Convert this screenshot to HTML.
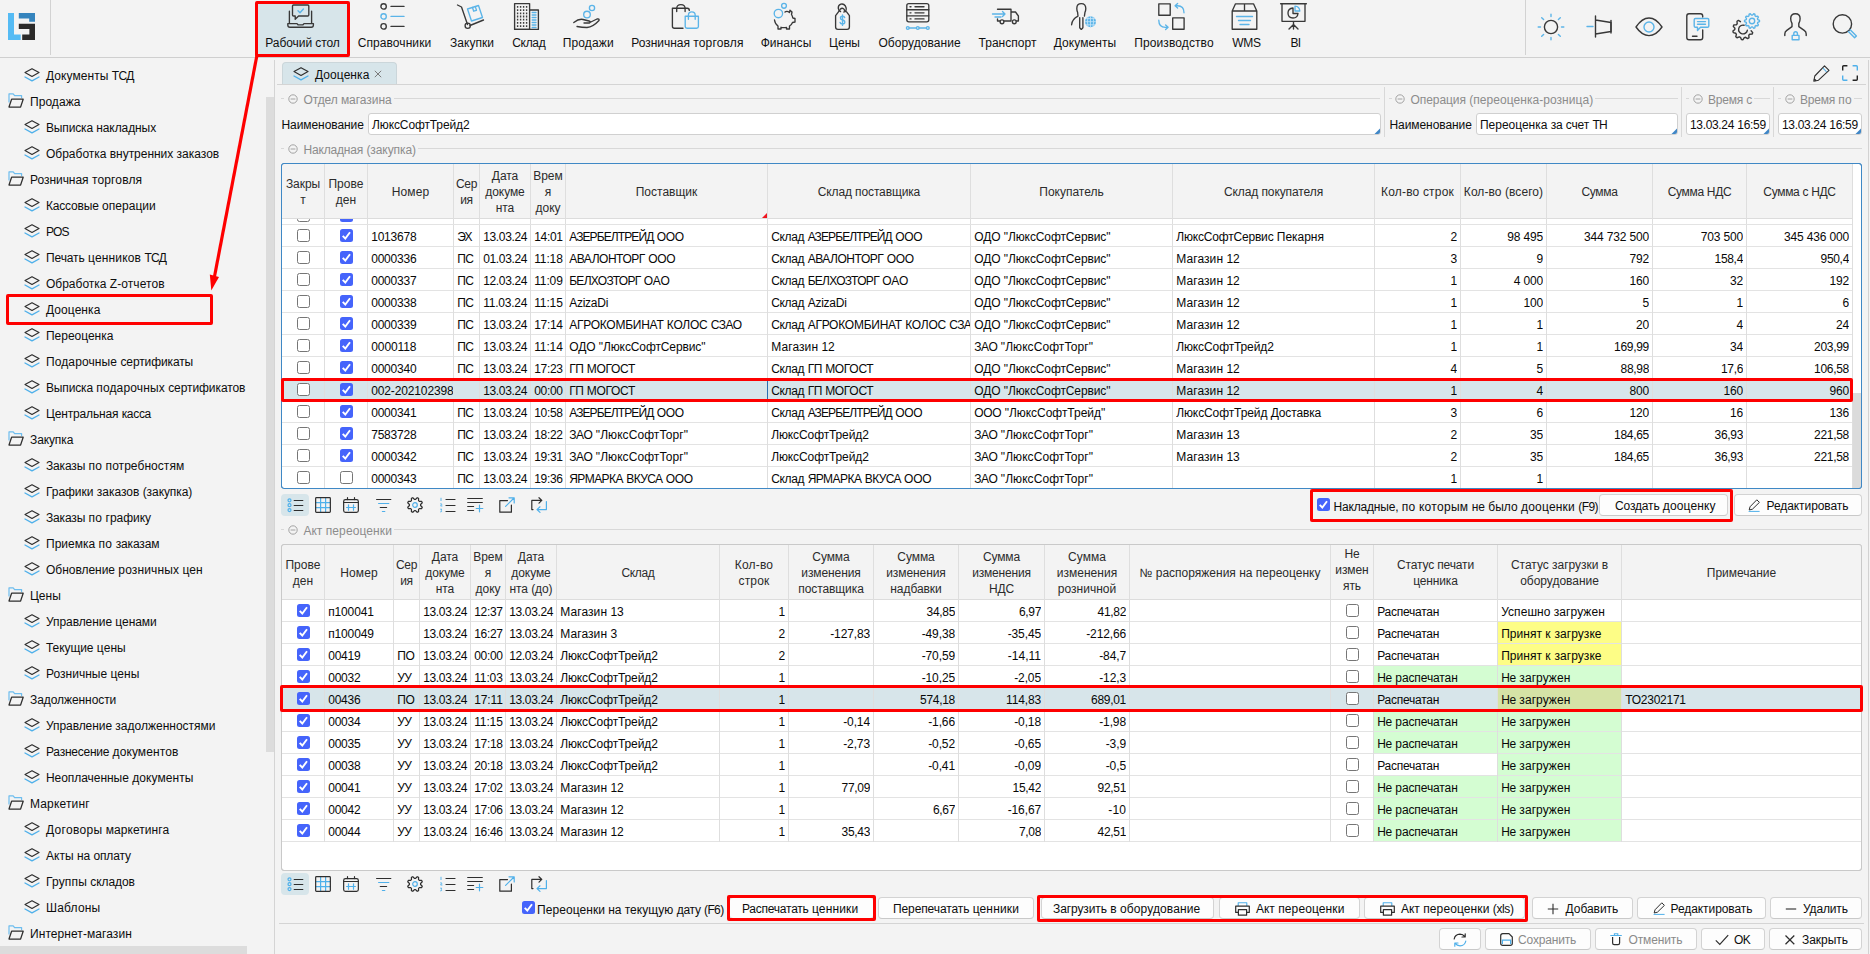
<!DOCTYPE html>
<html lang="ru"><head><meta charset="utf-8"><title>Дооценка</title><style>
html,body{margin:0;padding:0}
body{width:1870px;height:954px;overflow:hidden;background:#f3f3f3;font-family:"Liberation Sans",sans-serif;font-size:12px;color:#0d0d0d;position:relative}
.a{position:absolute}
.t{position:absolute;white-space:nowrap;line-height:16px;height:16px}
.c{position:absolute;white-space:nowrap;line-height:22px;height:22px;font-size:12px;color:#080808;overflow:hidden}
.h{position:absolute;text-align:center;line-height:16px;color:#2b2b2b;display:flex;align-items:center;justify-content:center}
.vl{position:absolute;width:1px;background:#dedede}
.hl{position:absolute;height:1px;background:#e3e3e3}
.cb{position:absolute;width:11px;height:11px;border:1px solid #767676;border-radius:2.5px;background:#fff}
.cbc{position:absolute;width:13px;height:13px;border-radius:2.5px;background:#4564fb}
.btn{position:absolute;height:22px;border:1px solid #d3d3d3;border-bottom-color:#c9c9c9;border-radius:4px;background:#fdfdfd;box-sizing:border-box;line-height:19px;text-align:center;white-space:nowrap;font-size:12px;color:#0d0d0d}
.inp{position:absolute;box-sizing:border-box;border:1px solid #d0d0d0;border-radius:3px;background:#fff;line-height:22.5px;padding-left:4px;white-space:nowrap;overflow:hidden}
.leg{position:absolute;color:#8c8c8c;line-height:16px;white-space:nowrap;background:#f3f3f3;padding:0 2px}
.red{position:absolute;border:3px solid #fe0000;box-sizing:border-box;border-radius:2px;z-index:5}
svg{position:absolute;overflow:visible}
</style></head><body>
<div class="a" style="left:0;top:0;width:1870px;height:57px;background:#f3f3f3"></div>
<div class="a" style="left:0;top:57px;width:1870px;height:1px;background:#cfcfcf"></div>
<div class="a" style="left:50px;top:0;width:1px;height:55px;background:#d2d2d2"></div>
<div class="a" style="left:1525px;top:0;width:1px;height:55px;background:#d2d2d2"></div>
<svg width="28" height="28" viewBox="0 0 28 28" style="left:8px;top:13px"><path d="M0 0 H6 V21.4 H12.7 V27 H0 Z" fill="#55bbf4"/><path d="M10.8 0 H27 V8.8 H21.2 V5.4 H10.8 Z" fill="#3584bd"/><path d="M10.8 10.8 H27 V27 H14.2 V21.4 H21.4 V16 H10.8 Z" fill="#2b2a29"/></svg>
<div class="a" style="left:256px;top:1px;width:94px;height:56px;background:#d7e5ea"></div>
<div class="t" style="left:232.5px;width:140px;top:35px;text-align:center;font-size:12px;color:#111"><span style="letter-spacing:-0.07px">Рабочий</span> <span style="letter-spacing:-0.11px">стол</span></div>
<svg width="27" height="25" viewBox="0 0 27 25" style="left:287px;top:4px"><path d="M2.4 7.2 V19 M24.6 7.2 V19" fill="none" stroke="#383838" stroke-width="1.35" stroke-linecap="round" stroke-linejoin="round"/><path d="M0.8 19.6 H10 L11 20.8 H16 L17 19.6 H26.4 V21 Q26.4 23.2 24.2 23.2 H3 Q0.8 23.2 0.8 21 Z" fill="none" stroke="#383838" stroke-width="1.35" stroke-linecap="round" stroke-linejoin="round"/><path d="M6.5 1 H20.8 Q21.8 1 21.8 2 V11 Q21.8 12 20.8 12 H11.6 L8.2 15.2 V12 H6.5 Q5.5 12 5.5 11 V2 Q5.5 1 6.5 1 Z" fill="none" stroke="#383838" stroke-width="1.35" stroke-linecap="round" stroke-linejoin="round"/><path d="M11 6.8 L13 8.8 L16.4 5" fill="none" stroke="#5bb4e8" stroke-width="1.35" stroke-linecap="round" stroke-linejoin="round"/></svg>
<div class="t" style="left:324.5px;width:140px;top:35px;text-align:center;font-size:12px;color:#111"><span style="letter-spacing:0.07px">Справочники</span></div>
<svg width="25" height="27" viewBox="0 0 25 27" style="left:380px;top:3px"><circle cx="3.6" cy="3.4" r="2.7" fill="none" stroke="#383838" stroke-width="1.35" stroke-linecap="round" stroke-linejoin="round"/><circle cx="3.6" cy="13.4" r="2.7" fill="none" stroke="#5bb4e8" stroke-width="1.35" stroke-linecap="round" stroke-linejoin="round"/><circle cx="3.6" cy="23.4" r="2.7" fill="none" stroke="#383838" stroke-width="1.35" stroke-linecap="round" stroke-linejoin="round"/><path d="M11 3.4 H24" fill="none" stroke="#383838" stroke-width="1.35" stroke-linecap="round" stroke-linejoin="round"/><path d="M11 13.4 H24" fill="none" stroke="#5bb4e8" stroke-width="1.35" stroke-linecap="round" stroke-linejoin="round"/><path d="M11 23.4 H24" fill="none" stroke="#383838" stroke-width="1.35" stroke-linecap="round" stroke-linejoin="round"/></svg>
<div class="t" style="left:402px;width:140px;top:35px;text-align:center;font-size:12px;color:#111"><span style="letter-spacing:0.01px">Закупки</span></div>
<svg width="27" height="25" viewBox="0 0 27 25" style="left:457px;top:4px"><path d="M0.5 1 L4.5 3 L10.5 20.5" fill="none" stroke="#383838" stroke-width="1.35" stroke-linecap="round" stroke-linejoin="round"/><path d="M13 21.5 L26.5 16" fill="none" stroke="#383838" stroke-width="1.35" stroke-linecap="round" stroke-linejoin="round"/><circle cx="10.7" cy="21.8" r="2.6" fill="none" stroke="#383838" stroke-width="1.35" stroke-linecap="round" stroke-linejoin="round"/><path d="M10.5 5 L21.5 1.5 L25.5 13.5 L14.5 17 Z" fill="none" stroke="#5bb4e8" stroke-width="1.35" stroke-linecap="round" stroke-linejoin="round"/><path d="M15.5 3.5 L16.7 7.2 L19.5 6.3 L18.3 2.6" fill="none" stroke="#5bb4e8" stroke-width="1.35" stroke-linecap="round" stroke-linejoin="round"/></svg>
<div class="t" style="left:458.79999999999995px;width:140px;top:35px;text-align:center;font-size:12px;color:#111"><span style="letter-spacing:-0.33px">Склад</span></div>
<svg width="25" height="27" viewBox="0 0 25 27" style="left:514px;top:3px"><path d="M0.6 26.4 V0.6 H15.6 V26.4 Z" fill="none" stroke="#383838" stroke-width="1.35" stroke-linecap="round" stroke-linejoin="round"/><path d="M15.6 7 H24.4 V26.4 H0.6" fill="none" stroke="#383838" stroke-width="1.35" stroke-linecap="round" stroke-linejoin="round"/><path d="M3.6 3 V25 M6.6 3 V25 M9.6 3 V25 M12.6 3 V25" fill="none" stroke="#3d3d3d" stroke-width="1.4" stroke-dasharray="1.8 1.4"/><path d="M18.2 9.5 H22 M18.2 12 H22 M18.2 14.5 H22 M18.2 17 H22 M18.2 19.5 H22 M18.2 22 H22 M18.2 24.5 H22" fill="none" stroke="#5bb4e8" stroke-width="1.35" stroke-linecap="round" stroke-linejoin="round"/></svg>
<div class="t" style="left:518.3px;width:140px;top:35px;text-align:center;font-size:12px;color:#111"><span style="letter-spacing:0.14px">Продажи</span></div>
<svg width="27" height="25" viewBox="0 0 27 25" style="left:573px;top:4px"><circle cx="19" cy="4" r="2.6" fill="none" stroke="#5bb4e8" stroke-width="1.35" stroke-linecap="round" stroke-linejoin="round"/><circle cx="14" cy="10.5" r="3.3" fill="none" stroke="#5bb4e8" stroke-width="1.35" stroke-linecap="round" stroke-linejoin="round"/><path d="M0.8 18.5 Q6 14.5 10 15.5 L16 17 Q18 17.8 16.5 19 L11 19 M16.8 18.5 L24 15 Q26.5 14.5 26 16.5 Q20 23 14 23.5 Q9 23.5 4 22.5" fill="none" stroke="#383838" stroke-width="1.35" stroke-linecap="round" stroke-linejoin="round"/></svg>
<div class="t" style="left:617.5px;width:140px;top:35px;text-align:center;font-size:12px;color:#111"><span style="letter-spacing:-0.04px">Розничная</span> <span style="letter-spacing:0.16px">торговля</span></div>
<svg width="28" height="25" viewBox="0 0 28 25" style="left:671px;top:4px"><path d="M12 24.2 H3.4 Q1.4 24.2 1.4 22.2 V4.2 H16.4 Q18.3 4.2 18.3 6.4" fill="none" stroke="#383838" stroke-width="1.35" stroke-linecap="round" stroke-linejoin="round"/><path d="M5.7 7.6 V4.6 Q5.7 0.6 9.9 0.6 Q14.1 0.6 14.1 4.6 V7.6" fill="none" stroke="#383838" stroke-width="1.35" stroke-linecap="round" stroke-linejoin="round"/><path d="M14.2 12.2 H27.4 V22.4 Q27.4 24.2 25.6 24.2 H16 Q14.2 24.2 14.2 22.4 Z" fill="none" stroke="#5bb4e8" stroke-width="1.35" stroke-linecap="round" stroke-linejoin="round"/><path d="M17.4 15.2 V11.4 Q17.4 7.9 20.8 7.9 Q24.2 7.9 24.2 11.4 V15.2" fill="none" stroke="#5bb4e8" stroke-width="1.35" stroke-linecap="round" stroke-linejoin="round"/></svg>
<div class="t" style="left:716px;width:140px;top:35px;text-align:center;font-size:12px;color:#111"><span style="letter-spacing:0.03px">Финансы</span></div>
<svg width="23" height="27" viewBox="0 0 23 27" style="left:773px;top:3px"><circle cx="11" cy="2.8" r="2.4" fill="none" stroke="#5bb4e8" stroke-width="1.35" stroke-linecap="round" stroke-linejoin="round"/><circle cx="5.4" cy="10.5" r="4.2" fill="none" stroke="#5bb4e8" stroke-width="1.35" stroke-linecap="round" stroke-linejoin="round"/><path d="M12 9 Q14 7.5 16.5 9.5 L17 7.2 L19 9 L18.5 11.5 Q19.5 13 19.8 15 L22 15.5 V19 L19.5 19.5 Q18.5 22 16.5 23 V26 H13.5 V24.3 Q11 25 8 24.3 V26 H5 V23 Q2 21 1.5 17" fill="none" stroke="#383838" stroke-width="1.35" stroke-linecap="round" stroke-linejoin="round"/></svg>
<div class="t" style="left:774.5px;width:140px;top:35px;text-align:center;font-size:12px;color:#111"><span style="letter-spacing:-0.01px">Цены</span></div>
<svg width="17" height="27" viewBox="0 0 17 27" style="left:834px;top:3px"><path d="M11.5 8.6 Q13 5.5 11.4 3 Q9.6 0.4 6.8 1.2 Q4 2.2 4.3 5.4 Q4.6 7.6 6.6 8.6" fill="none" stroke="#383838" stroke-width="1.35" stroke-linecap="round" stroke-linejoin="round"/><path d="M6.2 6.2 Q8.4 4.2 10.2 6.4 Q11 7.8 10 9.2" fill="none" stroke="#383838" stroke-width="1.35" stroke-linecap="round" stroke-linejoin="round"/><path d="M5.6 7.4 L1.6 12.6 V24 Q1.6 26.3 3.9 26.3 H13.1 Q15.4 26.3 15.4 24 V12.6 L12.6 8.8" fill="none" stroke="#383838" stroke-width="1.35" stroke-linecap="round" stroke-linejoin="round"/><path d="M10.7 14.6 Q10.4 13.2 8.5 13.2 Q6.4 13.2 6.4 15.1 Q6.4 16.6 8.5 17 Q10.8 17.4 10.8 19.2 Q10.8 21 8.5 21 Q6.4 21 6.1 19.5 M8.5 11.8 V22.4" fill="none" stroke="#5bb4e8" stroke-width="1.35" stroke-linecap="round" stroke-linejoin="round"/></svg>
<div class="t" style="left:849.5px;width:140px;top:35px;text-align:center;font-size:12px;color:#111"><span style="letter-spacing:0.05px">Оборудование</span></div>
<svg width="24" height="27" viewBox="0 0 24 27" style="left:906px;top:3px"><rect x="0.8" y="0.6" width="22" height="18.2" rx="2" fill="none" stroke="#383838" stroke-width="1.35" stroke-linecap="round" stroke-linejoin="round"/><path d="M0.8 6.7 H22.8 M0.8 12.8 H22.8" fill="none" stroke="#383838" stroke-width="1.35" stroke-linecap="round" stroke-linejoin="round"/><path d="M4 3.7 H5 M9 3.7 H18 M4 9.8 H5 M9 9.8 H18 M4 15.9 H5 M9 15.9 H18" fill="none" stroke="#383838" stroke-width="1.35" stroke-linecap="round" stroke-linejoin="round"/><circle cx="1.8" cy="25" r="1.4" fill="none" stroke="#5bb4e8" stroke-width="1.35" stroke-linecap="round" stroke-linejoin="round"/><circle cx="11.8" cy="25" r="1.4" fill="none" stroke="#5bb4e8" stroke-width="1.35" stroke-linecap="round" stroke-linejoin="round"/><circle cx="21.8" cy="25" r="1.4" fill="none" stroke="#5bb4e8" stroke-width="1.35" stroke-linecap="round" stroke-linejoin="round"/><path d="M3.2 25 H10.4 M13.2 25 H20.4" fill="none" stroke="#5bb4e8" stroke-width="1.35" stroke-linecap="round" stroke-linejoin="round"/></svg>
<div class="t" style="left:937.5px;width:140px;top:35px;text-align:center;font-size:12px;color:#111"><span style="letter-spacing:0.02px">Транспорт</span></div>
<svg width="28" height="17" viewBox="0 0 28 17" style="left:992px;top:8px"><path d="M5.5 1.2 H19 V13 M19 4 H23.5 L26.4 8 V13 H24.5 M19 13 H12 M8 13 H5.5 V11" fill="none" stroke="#383838" stroke-width="1.35" stroke-linecap="round" stroke-linejoin="round"/><circle cx="10" cy="13.8" r="1.9" fill="none" stroke="#383838" stroke-width="1.35" stroke-linecap="round" stroke-linejoin="round"/><circle cx="22.3" cy="13.8" r="1.9" fill="none" stroke="#383838" stroke-width="1.35" stroke-linecap="round" stroke-linejoin="round"/><path d="M0.5 6 H13 M3 9 H9 M10.5 3.5 L13 6 L10.5 8.5" fill="none" stroke="#5bb4e8" stroke-width="1.35" stroke-linecap="round" stroke-linejoin="round"/></svg>
<div class="t" style="left:1015px;width:140px;top:35px;text-align:center;font-size:12px;color:#111"><span style="letter-spacing:0.07px">Документы</span></div>
<svg width="26" height="27" viewBox="0 0 26 27" style="left:1071px;top:3px"><path d="M7 13.1 L6.6 9.2 Q5.8 7.5 5.8 5.5 Q5.8 0.6 10.3 0.6 Q14.8 0.6 14.8 5.5 Q14.8 7.5 14 9.2 L13.4 13.1 M7 13.1 Q1 16 0.6 21.8" fill="none" stroke="#383838" stroke-width="1.35" stroke-linecap="round" stroke-linejoin="round"/><path d="M8.7 14.6 V24.8 L10.3 26.4 L11.9 24.8 V14.6" fill="none" stroke="#383838" stroke-width="1.35" stroke-linecap="round" stroke-linejoin="round"/><circle cx="19.5" cy="18.7" r="5.5" fill="#5bb4e8"/><path d="M14 18.7 H25 M19.5 13.2 V24.2 M15 15.6 H24 M15 21.8 H24 M17 13.8 Q15.8 18.7 17 23.6 M22 13.8 Q23.2 18.7 22 23.6" fill="none" stroke="#c9e6f8" stroke-width="0.8"/></svg>
<div class="t" style="left:1104px;width:140px;top:35px;text-align:center;font-size:12px;color:#111"><span style="letter-spacing:0.09px">Производство</span></div>
<svg width="27" height="27" viewBox="0 0 27 27" style="left:1158px;top:3px"><rect x="0.8" y="0.8" width="11.4" height="11.4" fill="none" stroke="#383838" stroke-width="1.35" stroke-linecap="round" stroke-linejoin="round"/><rect x="14.7" y="14.8" width="11.4" height="11.4" fill="none" stroke="#383838" stroke-width="1.35" stroke-linecap="round" stroke-linejoin="round"/><path d="M17.4 2.7 H19.5 Q26 2.7 26 9.7 M19.6 0.4 L17.1 2.7 L19.6 5" fill="none" stroke="#5bb4e8" stroke-width="1.35" stroke-linecap="round" stroke-linejoin="round"/><path d="M0.8 17.2 Q0.8 24.3 7.4 24.3 H9.8 M7.6 22 L10.1 24.3 L7.6 26.6" fill="none" stroke="#5bb4e8" stroke-width="1.35" stroke-linecap="round" stroke-linejoin="round"/></svg>
<div class="t" style="left:1176.5px;width:140px;top:35px;text-align:center;font-size:12px;color:#111"><span style="letter-spacing:-0.30px">WMS</span></div>
<svg width="27" height="27" viewBox="0 0 27 27" style="left:1231px;top:3px"><path d="M1.2 8 L4.5 0.8 H22.5 L25.8 8 V26.2 H1.2 Z M1.2 8 H25.8 M13.5 0.8 V8" fill="none" stroke="#383838" stroke-width="1.35" stroke-linecap="round" stroke-linejoin="round"/><path d="M5.5 13.5 H21.5 M7.5 17.5 H19.5 M9 21.5 H18" fill="none" stroke="#5bb4e8" stroke-width="1.35" stroke-linecap="round" stroke-linejoin="round"/></svg>
<div class="t" style="left:1225.5px;width:140px;top:35px;text-align:center;font-size:12px;color:#111"><span style="letter-spacing:-0.64px">BI</span></div>
<svg width="27" height="27" viewBox="0 0 27 27" style="left:1280px;top:3px"><path d="M0.6 0.7 H26.4 M2 0.7 V18.3 H25 V0.7 M13.5 18.3 V26 M13.5 21.5 L9 26 M13.5 21.5 L18 26" fill="none" stroke="#383838" stroke-width="1.35" stroke-linecap="round" stroke-linejoin="round"/><path d="M13 5 Q8 5.5 8 10 Q8 15 13 15 Q17.5 15 18 10.5 H13 Z" fill="none" stroke="#383838" stroke-width="1.35" stroke-linecap="round" stroke-linejoin="round"/><path d="M15 3.2 Q19.5 3.5 19.8 8 H15 Z" fill="none" stroke="#5bb4e8" stroke-width="1.35" stroke-linecap="round" stroke-linejoin="round"/></svg>
<svg width="28" height="28" viewBox="-14 -14 28 28" style="left:1537px;top:13px"><circle cx="0" cy="0" r="6.6" fill="none" stroke="#383838" stroke-width="1.4" stroke-linecap="round" stroke-linejoin="round"/><path d="M0 -10.5 V-12.8 M0 10.5 V12.8 M-10.5 0 H-12.8 M10.5 0 H12.8 M7.4 -7.4 L9.3 -9.3 M-7.4 -7.4 L-9.3 -9.3 M7.4 7.4 L9.3 9.3 M-7.4 7.4 L-9.3 9.3" fill="none" stroke="#5bb4e8" stroke-width="1.4" stroke-linecap="round" stroke-linejoin="round"/></svg>
<svg width="26" height="23" viewBox="0 0 26 23" style="left:1586px;top:15px"><path d="M1 11.5 H7" fill="none" stroke="#5bb4e8" stroke-width="1.4" stroke-linecap="round" stroke-linejoin="round"/><path d="M9.5 1 V22 M9.5 5 L25 7.5 V16.5 L9.5 19" fill="none" stroke="#383838" stroke-width="1.4" stroke-linecap="round" stroke-linejoin="round"/><path d="M25 5.5 V18" fill="none" stroke="#383838" stroke-width="1.4" stroke-linecap="round" stroke-linejoin="round"/></svg>
<svg width="28" height="20" viewBox="0 0 28 20" style="left:1635px;top:17px"><path d="M1 10 Q7 1 14 1 Q21 1 27 10 Q21 18.6 14 18.6 Q7 18.6 1 10 Z" fill="none" stroke="#383838" stroke-width="1.4" stroke-linecap="round" stroke-linejoin="round"/><circle cx="14" cy="10" r="5" fill="none" stroke="#5bb4e8" stroke-width="1.4" stroke-linecap="round" stroke-linejoin="round"/></svg>
<svg width="24" height="28" viewBox="0 0 24 28" style="left:1686px;top:13px"><path d="M14.5 0.8 H3 Q0.8 0.8 0.8 3 V24.5 Q0.8 26.7 3 26.7 H14.5 Q16.7 26.7 16.7 24.5 V17 M14.5 0.8 Q16.7 0.8 16.7 3 V4 M6.5 23.2 H11" fill="none" stroke="#383838" stroke-width="1.4" stroke-linecap="round" stroke-linejoin="round"/><path d="M9.5 5.5 H21.5 Q22.8 5.5 22.8 6.8 V13 Q22.8 14.3 21.5 14.3 H14.5 L11.5 17.5 V14.3 H9.5 Q8.2 14.3 8.2 13 V6.8 Q8.2 5.5 9.5 5.5 Z M11.5 8.6 H19.5 M11.5 11.2 H19.5" fill="none" stroke="#5bb4e8" stroke-width="1.4" stroke-linecap="round" stroke-linejoin="round"/></svg>
<svg width="28" height="28" viewBox="0 0 28 28" style="left:1733px;top:13px"><path d="M18.10 17.78 L19.70 19.65 L19.09 21.13 L16.63 21.32 L15.80 22.30 L16.00 24.75 L14.63 25.59 L12.53 24.30 L11.28 24.60 L10.00 26.70 L8.40 26.57 L7.47 24.30 L6.28 23.81 L4.00 24.75 L2.79 23.71 L3.37 21.32 L2.69 20.22 L0.30 19.65 L-0.07 18.10 L1.80 16.50 L1.90 15.22 L0.30 13.35 L0.91 11.87 L3.37 11.68 L4.20 10.70 L4.00 8.25 L5.37 7.41 L7.47 8.70" fill="none" stroke="#383838" stroke-width="1.4" stroke-linecap="round" stroke-linejoin="round"/><path d="M14.33 17.26 A4.4 4.4 0 1 1 11.06 12.23" fill="none" stroke="#383838" stroke-width="1.4" stroke-linecap="round" stroke-linejoin="round"/><path d="M26.48 7.41 L26.48 8.59 L24.74 9.38 L24.45 10.26 L25.39 11.92 L24.70 12.87 L22.83 12.49 L22.08 13.03 L21.87 14.93 L20.75 15.29 L19.46 13.88 L18.54 13.88 L17.25 15.29 L16.13 14.93 L15.92 13.03 L15.17 12.49 L13.30 12.87 L12.61 11.92 L13.55 10.26 L13.26 9.38 L11.52 8.59 L11.52 7.41 L13.26 6.62 L13.55 5.74 L12.61 4.08 L13.30 3.13 L15.17 3.51 L15.92 2.97 L16.13 1.07 L17.25 0.71 L18.54 2.12 L19.46 2.12 L20.75 0.71 L21.87 1.07 L22.08 2.97 L22.83 3.51 L24.70 3.13 L25.39 4.08 L24.45 5.74 L24.74 6.62 Z" fill="none" stroke="#5bb4e8" stroke-width="1.4" stroke-linecap="round" stroke-linejoin="round"/><circle cx="19" cy="8" r="2.7" fill="none" stroke="#5bb4e8" stroke-width="1.4" stroke-linecap="round" stroke-linejoin="round"/></svg>
<svg width="24" height="28" viewBox="0 0 24 28" style="left:1784px;top:13px"><path d="M8 13.6 V10.5 Q6.7 8.5 6.7 5.5 Q6.7 0.7 11.4 0.7 Q16.1 0.7 16.1 5.5 Q16.1 8.5 14.8 10.5 V13.6 L20.2 17.4 Q22.2 18.8 22.2 21 V22.6 M8 13.6 L2.8 17.4 Q0.8 18.8 0.8 21 V22.6" fill="none" stroke="#383838" stroke-width="1.4" stroke-linecap="round" stroke-linejoin="round"/><rect x="8.2" y="22.4" width="6.8" height="4.3" fill="none" stroke="#5bb4e8" stroke-width="1.4" stroke-linecap="round" stroke-linejoin="round"/><path d="M9.8 22.4 V20.6 Q9.8 18.8 11.6 18.8 Q13.4 18.8 13.4 20.6 V22.4" fill="none" stroke="#5bb4e8" stroke-width="1.4" stroke-linecap="round" stroke-linejoin="round"/></svg>
<svg width="27" height="27" viewBox="0 0 27 27" style="left:1832px;top:13px"><circle cx="10.4" cy="10.9" r="9.2" fill="none" stroke="#383838" stroke-width="1.4" stroke-linecap="round" stroke-linejoin="round"/><path d="M16.4 18.6 L22.6 24.8 L24.4 23 L18.2 16.8" fill="none" stroke="#5bb4e8" stroke-width="1.4" stroke-linecap="round" stroke-linejoin="round"/></svg>
<div class="a" style="left:274px;top:60px;width:1px;height:894px;background:#d4d4d4"></div>
<div class="a" style="left:266px;top:97px;width:8px;height:655px;background:#dcdcdc"></div>
<div class="a" style="left:0;top:946px;width:247px;height:8px;background:#dcdcdc"></div>
<svg width="16" height="14" viewBox="0 0 16 14" style="left:24px;top:68px"><path d="M8 0.7 L15 4.6 L8 8.5 L1 4.6 Z" fill="none" stroke="#2e2e2e" stroke-width="1.15" stroke-linejoin="round"/><path d="M1 9 L8 12.9 L15 9" fill="none" stroke="#4fb0ea" stroke-width="1.3" stroke-linecap="round" stroke-linejoin="round"/></svg>
<div class="t" style="left:46px;top:67.8px;"><span style="letter-spacing:0.07px">Документы</span> <span style="letter-spacing:-0.66px">ТСД</span></div>
<svg width="16" height="15" viewBox="0 0 16 15" style="left:8px;top:93px"><path d="M1 9 V0.8 H5.2 L6.6 2.6 H13.6 V4.6" fill="none" stroke="#6dbdee" stroke-width="1.2" stroke-linejoin="round" stroke-linecap="round"/><path d="M3.6 6.2 H15.2 L12.6 14 H1 Z" fill="none" stroke="#2e2e2e" stroke-width="1.25" stroke-linejoin="round"/></svg>
<div class="t" style="left:30px;top:93.8px;"><span style="letter-spacing:0.05px">Продажа</span></div>
<svg width="16" height="14" viewBox="0 0 16 14" style="left:24px;top:120px"><path d="M8 0.7 L15 4.6 L8 8.5 L1 4.6 Z" fill="none" stroke="#2e2e2e" stroke-width="1.15" stroke-linejoin="round"/><path d="M1 9 L8 12.9 L15 9" fill="none" stroke="#4fb0ea" stroke-width="1.3" stroke-linecap="round" stroke-linejoin="round"/></svg>
<div class="t" style="left:46px;top:119.8px;"><span style="letter-spacing:-0.16px">Выписка</span> <span style="letter-spacing:-0.09px">накладных</span></div>
<svg width="16" height="14" viewBox="0 0 16 14" style="left:24px;top:146px"><path d="M8 0.7 L15 4.6 L8 8.5 L1 4.6 Z" fill="none" stroke="#2e2e2e" stroke-width="1.15" stroke-linejoin="round"/><path d="M1 9 L8 12.9 L15 9" fill="none" stroke="#4fb0ea" stroke-width="1.3" stroke-linecap="round" stroke-linejoin="round"/></svg>
<div class="t" style="left:46px;top:145.8px;"><span style="letter-spacing:-0.01px">Обработка</span> <span style="letter-spacing:-0.04px">внутренних</span> <span style="letter-spacing:-0.00px">заказов</span></div>
<svg width="16" height="15" viewBox="0 0 16 15" style="left:8px;top:171px"><path d="M1 9 V0.8 H5.2 L6.6 2.6 H13.6 V4.6" fill="none" stroke="#6dbdee" stroke-width="1.2" stroke-linejoin="round" stroke-linecap="round"/><path d="M3.6 6.2 H15.2 L12.6 14 H1 Z" fill="none" stroke="#2e2e2e" stroke-width="1.25" stroke-linejoin="round"/></svg>
<div class="t" style="left:30px;top:171.8px;"><span style="letter-spacing:-0.04px">Розничная</span> <span style="letter-spacing:0.16px">торговля</span></div>
<svg width="16" height="14" viewBox="0 0 16 14" style="left:24px;top:198px"><path d="M8 0.7 L15 4.6 L8 8.5 L1 4.6 Z" fill="none" stroke="#2e2e2e" stroke-width="1.15" stroke-linejoin="round"/><path d="M1 9 L8 12.9 L15 9" fill="none" stroke="#4fb0ea" stroke-width="1.3" stroke-linecap="round" stroke-linejoin="round"/></svg>
<div class="t" style="left:46px;top:197.8px;"><span style="letter-spacing:-0.18px">Кассовые</span> <span style="letter-spacing:0.04px">операции</span></div>
<svg width="16" height="14" viewBox="0 0 16 14" style="left:24px;top:224px"><path d="M8 0.7 L15 4.6 L8 8.5 L1 4.6 Z" fill="none" stroke="#2e2e2e" stroke-width="1.15" stroke-linejoin="round"/><path d="M1 9 L8 12.9 L15 9" fill="none" stroke="#4fb0ea" stroke-width="1.3" stroke-linecap="round" stroke-linejoin="round"/></svg>
<div class="t" style="left:46px;top:223.8px;"><span style="letter-spacing:-0.90px">POS</span></div>
<svg width="16" height="14" viewBox="0 0 16 14" style="left:24px;top:250px"><path d="M8 0.7 L15 4.6 L8 8.5 L1 4.6 Z" fill="none" stroke="#2e2e2e" stroke-width="1.15" stroke-linejoin="round"/><path d="M1 9 L8 12.9 L15 9" fill="none" stroke="#4fb0ea" stroke-width="1.3" stroke-linecap="round" stroke-linejoin="round"/></svg>
<div class="t" style="left:46px;top:249.8px;"><span style="letter-spacing:-0.11px">Печать</span> <span style="letter-spacing:0.16px">ценников</span> <span style="letter-spacing:-0.66px">ТСД</span></div>
<svg width="16" height="14" viewBox="0 0 16 14" style="left:24px;top:276px"><path d="M8 0.7 L15 4.6 L8 8.5 L1 4.6 Z" fill="none" stroke="#2e2e2e" stroke-width="1.15" stroke-linejoin="round"/><path d="M1 9 L8 12.9 L15 9" fill="none" stroke="#4fb0ea" stroke-width="1.3" stroke-linecap="round" stroke-linejoin="round"/></svg>
<div class="t" style="left:46px;top:275.8px;"><span style="letter-spacing:-0.01px">Обработка</span> <span style="letter-spacing:0.09px">Z-отчетов</span></div>
<svg width="16" height="14" viewBox="0 0 16 14" style="left:24px;top:302px"><path d="M8 0.7 L15 4.6 L8 8.5 L1 4.6 Z" fill="none" stroke="#2e2e2e" stroke-width="1.15" stroke-linejoin="round"/><path d="M1 9 L8 12.9 L15 9" fill="none" stroke="#4fb0ea" stroke-width="1.3" stroke-linecap="round" stroke-linejoin="round"/></svg>
<div class="t" style="left:46px;top:301.8px;"><span style="letter-spacing:0.07px">Дооценка</span></div>
<svg width="16" height="14" viewBox="0 0 16 14" style="left:24px;top:328px"><path d="M8 0.7 L15 4.6 L8 8.5 L1 4.6 Z" fill="none" stroke="#2e2e2e" stroke-width="1.15" stroke-linejoin="round"/><path d="M1 9 L8 12.9 L15 9" fill="none" stroke="#4fb0ea" stroke-width="1.3" stroke-linecap="round" stroke-linejoin="round"/></svg>
<div class="t" style="left:46px;top:327.8px;"><span style="letter-spacing:-0.02px">Переоценка</span></div>
<svg width="16" height="14" viewBox="0 0 16 14" style="left:24px;top:354px"><path d="M8 0.7 L15 4.6 L8 8.5 L1 4.6 Z" fill="none" stroke="#2e2e2e" stroke-width="1.15" stroke-linejoin="round"/><path d="M1 9 L8 12.9 L15 9" fill="none" stroke="#4fb0ea" stroke-width="1.3" stroke-linecap="round" stroke-linejoin="round"/></svg>
<div class="t" style="left:46px;top:353.8px;"><span style="letter-spacing:0.11px">Подарочные</span> <span style="letter-spacing:-0.11px">сертификаты</span></div>
<svg width="16" height="14" viewBox="0 0 16 14" style="left:24px;top:380px"><path d="M8 0.7 L15 4.6 L8 8.5 L1 4.6 Z" fill="none" stroke="#2e2e2e" stroke-width="1.15" stroke-linejoin="round"/><path d="M1 9 L8 12.9 L15 9" fill="none" stroke="#4fb0ea" stroke-width="1.3" stroke-linecap="round" stroke-linejoin="round"/></svg>
<div class="t" style="left:46px;top:379.8px;"><span style="letter-spacing:-0.16px">Выписка</span> <span style="letter-spacing:0.14px">подарочных</span> <span style="letter-spacing:-0.08px">сертификатов</span></div>
<svg width="16" height="14" viewBox="0 0 16 14" style="left:24px;top:406px"><path d="M8 0.7 L15 4.6 L8 8.5 L1 4.6 Z" fill="none" stroke="#2e2e2e" stroke-width="1.15" stroke-linejoin="round"/><path d="M1 9 L8 12.9 L15 9" fill="none" stroke="#4fb0ea" stroke-width="1.3" stroke-linecap="round" stroke-linejoin="round"/></svg>
<div class="t" style="left:46px;top:405.8px;"><span style="letter-spacing:-0.16px">Центральная</span> <span style="letter-spacing:-0.32px">касса</span></div>
<svg width="16" height="15" viewBox="0 0 16 15" style="left:8px;top:431px"><path d="M1 9 V0.8 H5.2 L6.6 2.6 H13.6 V4.6" fill="none" stroke="#6dbdee" stroke-width="1.2" stroke-linejoin="round" stroke-linecap="round"/><path d="M3.6 6.2 H15.2 L12.6 14 H1 Z" fill="none" stroke="#2e2e2e" stroke-width="1.25" stroke-linejoin="round"/></svg>
<div class="t" style="left:30px;top:431.8px;"><span style="letter-spacing:-0.11px">Закупка</span></div>
<svg width="16" height="14" viewBox="0 0 16 14" style="left:24px;top:458px"><path d="M8 0.7 L15 4.6 L8 8.5 L1 4.6 Z" fill="none" stroke="#2e2e2e" stroke-width="1.15" stroke-linejoin="round"/><path d="M1 9 L8 12.9 L15 9" fill="none" stroke="#4fb0ea" stroke-width="1.3" stroke-linecap="round" stroke-linejoin="round"/></svg>
<div class="t" style="left:46px;top:457.8px;"><span style="letter-spacing:-0.17px">Заказы</span> <span style="letter-spacing:0.32px">по</span> <span style="letter-spacing:0.05px">потребностям</span></div>
<svg width="16" height="14" viewBox="0 0 16 14" style="left:24px;top:484px"><path d="M8 0.7 L15 4.6 L8 8.5 L1 4.6 Z" fill="none" stroke="#2e2e2e" stroke-width="1.15" stroke-linejoin="round"/><path d="M1 9 L8 12.9 L15 9" fill="none" stroke="#4fb0ea" stroke-width="1.3" stroke-linecap="round" stroke-linejoin="round"/></svg>
<div class="t" style="left:46px;top:483.8px;"><span style="letter-spacing:-0.05px">Графики</span> <span style="letter-spacing:-0.00px">заказов</span> <span style="letter-spacing:-0.08px">(закупка)</span></div>
<svg width="16" height="14" viewBox="0 0 16 14" style="left:24px;top:510px"><path d="M8 0.7 L15 4.6 L8 8.5 L1 4.6 Z" fill="none" stroke="#2e2e2e" stroke-width="1.15" stroke-linejoin="round"/><path d="M1 9 L8 12.9 L15 9" fill="none" stroke="#4fb0ea" stroke-width="1.3" stroke-linecap="round" stroke-linejoin="round"/></svg>
<div class="t" style="left:46px;top:509.8px;"><span style="letter-spacing:-0.17px">Заказы</span> <span style="letter-spacing:0.32px">по</span> <span style="letter-spacing:-0.03px">графику</span></div>
<svg width="16" height="14" viewBox="0 0 16 14" style="left:24px;top:536px"><path d="M8 0.7 L15 4.6 L8 8.5 L1 4.6 Z" fill="none" stroke="#2e2e2e" stroke-width="1.15" stroke-linejoin="round"/><path d="M1 9 L8 12.9 L15 9" fill="none" stroke="#4fb0ea" stroke-width="1.3" stroke-linecap="round" stroke-linejoin="round"/></svg>
<div class="t" style="left:46px;top:535.8px;"><span style="letter-spacing:-0.00px">Приемка</span> <span style="letter-spacing:0.32px">по</span> <span style="letter-spacing:-0.13px">заказам</span></div>
<svg width="16" height="14" viewBox="0 0 16 14" style="left:24px;top:562px"><path d="M8 0.7 L15 4.6 L8 8.5 L1 4.6 Z" fill="none" stroke="#2e2e2e" stroke-width="1.15" stroke-linejoin="round"/><path d="M1 9 L8 12.9 L15 9" fill="none" stroke="#4fb0ea" stroke-width="1.3" stroke-linecap="round" stroke-linejoin="round"/></svg>
<div class="t" style="left:46px;top:561.8px;"><span style="letter-spacing:-0.03px">Обновление</span> <span style="letter-spacing:0.14px">розничных</span> <span style="letter-spacing:0.01px">цен</span></div>
<svg width="16" height="15" viewBox="0 0 16 15" style="left:8px;top:587px"><path d="M1 9 V0.8 H5.2 L6.6 2.6 H13.6 V4.6" fill="none" stroke="#6dbdee" stroke-width="1.2" stroke-linejoin="round" stroke-linecap="round"/><path d="M3.6 6.2 H15.2 L12.6 14 H1 Z" fill="none" stroke="#2e2e2e" stroke-width="1.25" stroke-linejoin="round"/></svg>
<div class="t" style="left:30px;top:587.8px;"><span style="letter-spacing:-0.01px">Цены</span></div>
<svg width="16" height="14" viewBox="0 0 16 14" style="left:24px;top:614px"><path d="M8 0.7 L15 4.6 L8 8.5 L1 4.6 Z" fill="none" stroke="#2e2e2e" stroke-width="1.15" stroke-linejoin="round"/><path d="M1 9 L8 12.9 L15 9" fill="none" stroke="#4fb0ea" stroke-width="1.3" stroke-linecap="round" stroke-linejoin="round"/></svg>
<div class="t" style="left:46px;top:613.8px;"><span style="letter-spacing:-0.07px">Управление</span> <span style="letter-spacing:-0.05px">ценами</span></div>
<svg width="16" height="14" viewBox="0 0 16 14" style="left:24px;top:640px"><path d="M8 0.7 L15 4.6 L8 8.5 L1 4.6 Z" fill="none" stroke="#2e2e2e" stroke-width="1.15" stroke-linejoin="round"/><path d="M1 9 L8 12.9 L15 9" fill="none" stroke="#4fb0ea" stroke-width="1.3" stroke-linecap="round" stroke-linejoin="round"/></svg>
<div class="t" style="left:46px;top:639.8px;"><span style="letter-spacing:-0.07px">Текущие</span> <span style="letter-spacing:0.07px">цены</span></div>
<svg width="16" height="14" viewBox="0 0 16 14" style="left:24px;top:666px"><path d="M8 0.7 L15 4.6 L8 8.5 L1 4.6 Z" fill="none" stroke="#2e2e2e" stroke-width="1.15" stroke-linejoin="round"/><path d="M1 9 L8 12.9 L15 9" fill="none" stroke="#4fb0ea" stroke-width="1.3" stroke-linecap="round" stroke-linejoin="round"/></svg>
<div class="t" style="left:46px;top:665.8px;"><span style="letter-spacing:0.02px">Розничные</span> <span style="letter-spacing:0.07px">цены</span></div>
<svg width="16" height="15" viewBox="0 0 16 15" style="left:8px;top:691px"><path d="M1 9 V0.8 H5.2 L6.6 2.6 H13.6 V4.6" fill="none" stroke="#6dbdee" stroke-width="1.2" stroke-linejoin="round" stroke-linecap="round"/><path d="M3.6 6.2 H15.2 L12.6 14 H1 Z" fill="none" stroke="#2e2e2e" stroke-width="1.25" stroke-linejoin="round"/></svg>
<div class="t" style="left:30px;top:691.8px;"><span style="letter-spacing:-0.07px">Задолженности</span></div>
<svg width="16" height="14" viewBox="0 0 16 14" style="left:24px;top:718px"><path d="M8 0.7 L15 4.6 L8 8.5 L1 4.6 Z" fill="none" stroke="#2e2e2e" stroke-width="1.15" stroke-linejoin="round"/><path d="M1 9 L8 12.9 L15 9" fill="none" stroke="#4fb0ea" stroke-width="1.3" stroke-linecap="round" stroke-linejoin="round"/></svg>
<div class="t" style="left:46px;top:717.8px;"><span style="letter-spacing:-0.07px">Управление</span> <span style="letter-spacing:-0.00px">задолженностями</span></div>
<svg width="16" height="14" viewBox="0 0 16 14" style="left:24px;top:744px"><path d="M8 0.7 L15 4.6 L8 8.5 L1 4.6 Z" fill="none" stroke="#2e2e2e" stroke-width="1.15" stroke-linejoin="round"/><path d="M1 9 L8 12.9 L15 9" fill="none" stroke="#4fb0ea" stroke-width="1.3" stroke-linecap="round" stroke-linejoin="round"/></svg>
<div class="t" style="left:46px;top:743.8px;"><span style="letter-spacing:-0.24px">Разнесение</span> <span style="letter-spacing:0.09px">документов</span></div>
<svg width="16" height="14" viewBox="0 0 16 14" style="left:24px;top:770px"><path d="M8 0.7 L15 4.6 L8 8.5 L1 4.6 Z" fill="none" stroke="#2e2e2e" stroke-width="1.15" stroke-linejoin="round"/><path d="M1 9 L8 12.9 L15 9" fill="none" stroke="#4fb0ea" stroke-width="1.3" stroke-linecap="round" stroke-linejoin="round"/></svg>
<div class="t" style="left:46px;top:769.8px;"><span style="letter-spacing:-0.05px">Неоплаченные</span> <span style="letter-spacing:0.08px">документы</span></div>
<svg width="16" height="15" viewBox="0 0 16 15" style="left:8px;top:795px"><path d="M1 9 V0.8 H5.2 L6.6 2.6 H13.6 V4.6" fill="none" stroke="#6dbdee" stroke-width="1.2" stroke-linejoin="round" stroke-linecap="round"/><path d="M3.6 6.2 H15.2 L12.6 14 H1 Z" fill="none" stroke="#2e2e2e" stroke-width="1.25" stroke-linejoin="round"/></svg>
<div class="t" style="left:30px;top:795.8px;"><span style="letter-spacing:0.16px">Маркетинг</span></div>
<svg width="16" height="14" viewBox="0 0 16 14" style="left:24px;top:822px"><path d="M8 0.7 L15 4.6 L8 8.5 L1 4.6 Z" fill="none" stroke="#2e2e2e" stroke-width="1.15" stroke-linejoin="round"/><path d="M1 9 L8 12.9 L15 9" fill="none" stroke="#4fb0ea" stroke-width="1.3" stroke-linecap="round" stroke-linejoin="round"/></svg>
<div class="t" style="left:46px;top:821.8px;"><span style="letter-spacing:0.30px">Договоры</span> <span style="letter-spacing:0.06px">маркетинга</span></div>
<svg width="16" height="14" viewBox="0 0 16 14" style="left:24px;top:848px"><path d="M8 0.7 L15 4.6 L8 8.5 L1 4.6 Z" fill="none" stroke="#2e2e2e" stroke-width="1.15" stroke-linejoin="round"/><path d="M1 9 L8 12.9 L15 9" fill="none" stroke="#4fb0ea" stroke-width="1.3" stroke-linecap="round" stroke-linejoin="round"/></svg>
<div class="t" style="left:46px;top:847.8px;"><span style="letter-spacing:0.06px">Акты</span> <span style="letter-spacing:-0.18px">на</span> <span style="letter-spacing:-0.13px">оплату</span></div>
<svg width="16" height="14" viewBox="0 0 16 14" style="left:24px;top:874px"><path d="M8 0.7 L15 4.6 L8 8.5 L1 4.6 Z" fill="none" stroke="#2e2e2e" stroke-width="1.15" stroke-linejoin="round"/><path d="M1 9 L8 12.9 L15 9" fill="none" stroke="#4fb0ea" stroke-width="1.3" stroke-linecap="round" stroke-linejoin="round"/></svg>
<div class="t" style="left:46px;top:873.8px;"><span style="letter-spacing:0.16px">Группы</span> <span style="letter-spacing:-0.08px">складов</span></div>
<svg width="16" height="14" viewBox="0 0 16 14" style="left:24px;top:900px"><path d="M8 0.7 L15 4.6 L8 8.5 L1 4.6 Z" fill="none" stroke="#2e2e2e" stroke-width="1.15" stroke-linejoin="round"/><path d="M1 9 L8 12.9 L15 9" fill="none" stroke="#4fb0ea" stroke-width="1.3" stroke-linecap="round" stroke-linejoin="round"/></svg>
<div class="t" style="left:46px;top:899.8px;"><span style="letter-spacing:0.19px">Шаблоны</span></div>
<svg width="16" height="15" viewBox="0 0 16 15" style="left:8px;top:925px"><path d="M1 9 V0.8 H5.2 L6.6 2.6 H13.6 V4.6" fill="none" stroke="#6dbdee" stroke-width="1.2" stroke-linejoin="round" stroke-linecap="round"/><path d="M3.6 6.2 H15.2 L12.6 14 H1 Z" fill="none" stroke="#2e2e2e" stroke-width="1.25" stroke-linejoin="round"/></svg>
<div class="t" style="left:30px;top:925.8px;"><span style="letter-spacing:0.07px">Интернет-магазин</span></div>
<div class="a" style="left:277px;top:84px;width:1589px;height:1px;background:#d4d4d4"></div>
<div class="a" style="left:282px;top:62px;width:115px;height:22px;background:#d7e5ea;border:1px solid #cbd6da;border-bottom:none;border-radius:4px 4px 0 0;box-sizing:border-box"></div>
<svg width="16" height="14" viewBox="0 0 16 14" style="left:293px;top:67px"><path d="M8 0.7 L15 4.6 L8 8.5 L1 4.6 Z" fill="none" stroke="#2e2e2e" stroke-width="1.15" stroke-linejoin="round"/><path d="M1 9 L8 12.9 L15 9" fill="none" stroke="#4fb0ea" stroke-width="1.3" stroke-linecap="round" stroke-linejoin="round"/></svg>
<div class="t" style="left:315px;top:67px;letter-spacing:0.07px">Дооценка</div>
<svg width="8" height="8" viewBox="0 0 8 8" style="left:374px;top:70px"><path d="M0.8 0.8 L7.2 7.2 M7.2 0.8 L0.8 7.2" stroke="#7a7a7a" stroke-width="1" fill="none"/></svg>
<svg width="17" height="17" viewBox="0 0 17 17" style="left:1813px;top:65px"><path d="M11.5 0.8 L16 5.3 L5.5 15.2 L0.8 16.2 L1.8 11 Z" fill="none" stroke="#2e2e2e" stroke-width="1.1" stroke-linejoin="round"/><path d="M10 3.2 L13.6 6.8" stroke="#5bb4e8" stroke-width="1.1"/><path d="M1.2 14 L3 15.8" stroke="#2e2e2e" stroke-width="1.6"/></svg>
<svg width="16" height="16" viewBox="0 0 16 16" style="left:1842px;top:65px"><path d="M0.7 5.4 V1.7 Q0.7 0.7 1.7 0.7 H5.4" fill="none" stroke="#222" stroke-width="1.4"/><path d="M10.6 0.7 H14.3 Q15.3 0.7 15.3 1.7 V5.4" fill="none" stroke="#4fb0ea" stroke-width="1.4"/><path d="M0.7 10.6 V14.3 Q0.7 15.3 1.7 15.3 H5.4" fill="none" stroke="#4fb0ea" stroke-width="1.4"/><path d="M10.6 15.3 H14.3 Q15.3 15.3 15.3 14.3 V10.6" fill="none" stroke="#222" stroke-width="1.4"/></svg>
<div class="a" style="left:1868px;top:60px;width:1px;height:894px;background:#d2d2d2"></div>
<div class="a" style="left:281px;top:98px;width:1099px;height:1px;background:#d8d8d8"></div>
<div class="leg" style="left:283.5px;top:92px;padding:0 2px 0 20.0px;"><span style="letter-spacing:-0.13px">Отдел</span> <span style="letter-spacing:-0.05px">магазина</span></div>
<svg width="10" height="10" viewBox="0 0 10 10" style="left:287.5px;top:93.7px"><circle cx="5" cy="5" r="4.2" fill="none" stroke="#9a9a9a" stroke-width="0.9"/><path d="M2.6 5 H7.4" stroke="#9a9a9a" stroke-width="0.9"/></svg>
<div class="a" style="left:1389px;top:98px;width:289px;height:1px;background:#d8d8d8"></div>
<div class="leg" style="left:1391.5px;top:92px;padding:0 2px 0 19.0px;"><span style="letter-spacing:-0.07px">Операция</span> <span style="letter-spacing:0.05px">(переоценка-розница)</span></div>
<svg width="10" height="10" viewBox="0 0 10 10" style="left:1395px;top:93.7px"><circle cx="5" cy="5" r="4.2" fill="none" stroke="#9a9a9a" stroke-width="0.9"/><path d="M2.6 5 H7.4" stroke="#9a9a9a" stroke-width="0.9"/></svg>
<div class="a" style="left:1686px;top:98px;width:84px;height:1px;background:#d8d8d8"></div>
<div class="leg" style="left:1688.5px;top:92px;padding:0 2px 0 19.5px;"><span style="letter-spacing:-0.23px">Время</span> <span style="letter-spacing:-0.46px">с</span></div>
<svg width="10" height="10" viewBox="0 0 10 10" style="left:1692.5px;top:93.7px"><circle cx="5" cy="5" r="4.2" fill="none" stroke="#9a9a9a" stroke-width="0.9"/><path d="M2.6 5 H7.4" stroke="#9a9a9a" stroke-width="0.9"/></svg>
<div class="a" style="left:1778px;top:98px;width:84px;height:1px;background:#d8d8d8"></div>
<div class="leg" style="left:1780.5px;top:92px;padding:0 2px 0 19.5px;"><span style="letter-spacing:-0.23px">Время</span> <span style="letter-spacing:0.32px">по</span></div>
<svg width="10" height="10" viewBox="0 0 10 10" style="left:1784.5px;top:93.7px"><circle cx="5" cy="5" r="4.2" fill="none" stroke="#9a9a9a" stroke-width="0.9"/><path d="M2.6 5 H7.4" stroke="#9a9a9a" stroke-width="0.9"/></svg>
<div class="a" style="left:1384px;top:87px;width:1px;height:50px;background:#d8d8d8"></div>
<div class="a" style="left:1681px;top:87px;width:1px;height:50px;background:#d8d8d8"></div>
<div class="a" style="left:1773px;top:87px;width:1px;height:50px;background:#d8d8d8"></div>
<div class="t" style="left:281.5px;top:117px;letter-spacing:-0.07px">Наименование</div>
<div class="inp" style="left:368px;top:113px;width:1013px;height:22px;padding-left:3px"><span style="letter-spacing:-0.11px">ЛюксСофтТрейд2</span><svg width="6" height="6" viewBox="0 0 6 6" style="right:0;bottom:0"><path d="M6 0.5 V6 H0.5 Z" fill="#3f86c6"/></svg></div>
<div class="t" style="left:1389.5px;top:117px;letter-spacing:-0.07px">Наименование</div>
<div class="inp" style="left:1476px;top:113px;width:202px;height:22px;padding-left:3px"><span style="letter-spacing:-0.02px">Переоценка</span> <span style="letter-spacing:-0.27px">за</span> <span style="letter-spacing:-0.14px">счет</span> <span style="letter-spacing:-0.59px">ТН</span><svg width="6" height="6" viewBox="0 0 6 6" style="right:0;bottom:0"><path d="M6 0.5 V6 H0.5 Z" fill="#3f86c6"/></svg></div>
<div class="inp" style="left:1686px;top:113px;width:84px;height:22px;padding-left:3px"><span style="letter-spacing:-0.34px">13.03.24</span> <span style="letter-spacing:-0.31px">16:59</span><svg width="6" height="6" viewBox="0 0 6 6" style="right:0;bottom:0"><path d="M6 0.5 V6 H0.5 Z" fill="#3f86c6"/></svg></div>
<div class="inp" style="left:1778px;top:113px;width:84px;height:22px;padding-left:3px"><span style="letter-spacing:-0.34px">13.03.24</span> <span style="letter-spacing:-0.31px">16:59</span><svg width="6" height="6" viewBox="0 0 6 6" style="right:0;bottom:0"><path d="M6 0.5 V6 H0.5 Z" fill="#3f86c6"/></svg></div>
<div class="a" style="left:281px;top:148px;width:1581px;height:1px;background:#d8d8d8"></div>
<div class="leg" style="left:283.5px;top:142px;padding:0 2px 0 20.0px;"><span style="letter-spacing:-0.18px">Накладная</span> <span style="letter-spacing:-0.08px">(закупка)</span></div>
<svg width="10" height="10" viewBox="0 0 10 10" style="left:287.5px;top:143.7px"><circle cx="5" cy="5" r="4.2" fill="none" stroke="#9a9a9a" stroke-width="0.9"/><path d="M2.6 5 H7.4" stroke="#9a9a9a" stroke-width="0.9"/></svg>
<div class="a" style="left:281px;top:163px;width:1581px;height:326px;border:1px solid #3f88c5;border-radius:3px;box-sizing:border-box;background:#fff;overflow:hidden"></div>
<div class="a" style="left:282px;top:164px;width:1570px;height:54px;background:#f3f3f3;border-radius:2px 0 0 0"></div>
<div class="a" style="left:282px;top:218px;width:1570px;height:1px;background:#dcdcdc"></div>
<div class="hl" style="left:282px;top:246px;width:1570px"></div>
<div class="hl" style="left:282px;top:268px;width:1570px"></div>
<div class="hl" style="left:282px;top:290px;width:1570px"></div>
<div class="hl" style="left:282px;top:312px;width:1570px"></div>
<div class="hl" style="left:282px;top:334px;width:1570px"></div>
<div class="hl" style="left:282px;top:356px;width:1570px"></div>
<div class="hl" style="left:282px;top:378px;width:1570px"></div>
<div class="a" style="left:282px;top:379px;width:1570px;height:21px;background:#d7e5ea"></div>
<div class="hl" style="left:282px;top:400px;width:1570px"></div>
<div class="hl" style="left:282px;top:422px;width:1570px"></div>
<div class="hl" style="left:282px;top:444px;width:1570px"></div>
<div class="hl" style="left:282px;top:466px;width:1570px"></div>
<div class="hl" style="left:282px;top:488px;width:1570px"></div>
<div class="vl" style="left:324px;top:164px;height:325px"></div>
<div class="vl" style="left:367px;top:164px;height:325px"></div>
<div class="vl" style="left:453px;top:164px;height:325px"></div>
<div class="vl" style="left:479px;top:164px;height:325px"></div>
<div class="vl" style="left:530px;top:164px;height:325px"></div>
<div class="vl" style="left:565px;top:164px;height:325px"></div>
<div class="vl" style="left:767px;top:164px;height:325px"></div>
<div class="vl" style="left:970px;top:164px;height:325px"></div>
<div class="vl" style="left:1172px;top:164px;height:325px"></div>
<div class="vl" style="left:1374px;top:164px;height:325px"></div>
<div class="vl" style="left:1460px;top:164px;height:325px"></div>
<div class="vl" style="left:1546px;top:164px;height:325px"></div>
<div class="vl" style="left:1652px;top:164px;height:325px"></div>
<div class="vl" style="left:1746px;top:164px;height:325px"></div>
<div class="vl" style="left:1852px;top:164px;height:325px"></div>
<div class="a" style="left:281px;top:163px;width:1581px;height:326px;border:1px solid #3f88c5;border-radius:3px;box-sizing:border-box;z-index:3"></div>
<div class="h" style="left:282px;top:165.2px;width:42px;height:54px;letter-spacing:-0.05px"><span>Закры<br>т</span></div>
<div class="h" style="left:325px;top:165.2px;width:42px;height:54px;letter-spacing:0.05px"><span>Прове<br>ден</span></div>
<div class="h" style="left:368px;top:165.2px;width:85px;height:54px;letter-spacing:0.07px"><span>Номер</span></div>
<div class="h" style="left:454px;top:165.2px;width:25px;height:54px;letter-spacing:-0.26px"><span>Сер<br>ия</span></div>
<div class="h" style="left:480px;top:165.2px;width:50px;height:54px;letter-spacing:-0.08px"><span>Дата<br>докуме<br>нта</span></div>
<div class="h" style="left:531px;top:165.2px;width:34px;height:54px;letter-spacing:-0.05px"><span>Врем<br>я<br>доку</span></div>
<div class="h" style="left:566px;top:165.2px;width:201px;height:54px;letter-spacing:0.00px"><span>Поставщик</span></div>
<div class="h" style="left:768px;top:165.2px;width:202px;height:54px;letter-spacing:-0.13px"><span>Склад поставщика</span></div>
<div class="h" style="left:971px;top:165.2px;width:201px;height:54px;letter-spacing:-0.00px"><span>Покупатель</span></div>
<div class="h" style="left:1173px;top:165.2px;width:201px;height:54px;letter-spacing:-0.09px"><span>Склад покупателя</span></div>
<div class="h" style="left:1375px;top:165.2px;width:85px;height:54px;letter-spacing:0.17px"><span>Кол-во строк</span></div>
<div class="h" style="left:1461px;top:165.2px;width:85px;height:54px;letter-spacing:0.07px"><span>Кол-во (всего)</span></div>
<div class="h" style="left:1547px;top:165.2px;width:105px;height:54px;letter-spacing:-0.32px"><span>Сумма</span></div>
<div class="h" style="left:1653px;top:165.2px;width:93px;height:54px;letter-spacing:-0.33px"><span>Сумма НДС</span></div>
<div class="h" style="left:1747px;top:165.2px;width:105px;height:54px;letter-spacing:-0.32px"><span>Сумма с НДС</span></div>
<div class="cb" style="left:297px;top:229px"></div>
<div class="cbc" style="left:340px;top:229px"><svg width="13" height="13" viewBox="0 0 13 13" style="left:0;top:0"><path d="M2.7 6.9 L5.3 9.5 L10 3.3" fill="none" stroke="#fff" stroke-width="1.9" stroke-linecap="butt" stroke-linejoin="miter"/></svg></div>
<div class="c" style="left:371.2px;top:226.2px;width:81.8px"><span style="letter-spacing:-0.21px">1013678</span></div>
<div class="c" style="left:457.2px;top:226.2px;width:21.8px"><span style="letter-spacing:-0.83px">ЭХ</span></div>
<div class="c" style="left:483.2px;top:226.2px;width:46.8px"><span style="letter-spacing:-0.34px">13.03.24</span></div>
<div class="c" style="left:534.2px;top:226.2px;width:30.8px"><span style="letter-spacing:-0.31px">14:01</span></div>
<div class="c" style="left:569.2px;top:226.2px;width:197.8px"><span style="letter-spacing:-0.90px">АЗЕРБЕЛТРЕЙД</span> <span style="letter-spacing:-0.29px">ООО</span></div>
<div class="c" style="left:771.2px;top:226.2px;width:198.8px"><span style="letter-spacing:-0.33px">Склад</span> <span style="letter-spacing:-0.90px">АЗЕРБЕЛТРЕЙД</span> <span style="letter-spacing:-0.29px">ООО</span></div>
<div class="c" style="left:974.2px;top:226.2px;width:197.8px"><span style="letter-spacing:-0.09px">ОДО</span> <span style="letter-spacing:-0.11px">"ЛюксСофтСервис"</span></div>
<div class="c" style="left:1176.2px;top:226.2px;width:197.8px"><span style="letter-spacing:-0.18px">ЛюксСофтСервис</span> <span style="letter-spacing:-0.02px">Пекарня</span></div>
<div class="c" style="left:1375px;top:226.1px;width:82px;text-align:right"><span style="letter-spacing:-0.21px">2</span></div>
<div class="c" style="left:1461px;top:226.1px;width:82px;text-align:right"><span style="letter-spacing:-0.21px">98</span> <span style="letter-spacing:-0.21px">495</span></div>
<div class="c" style="left:1547px;top:226.1px;width:102px;text-align:right"><span style="letter-spacing:-0.21px">344</span> <span style="letter-spacing:-0.21px">732</span> <span style="letter-spacing:-0.21px">500</span></div>
<div class="c" style="left:1653px;top:226.1px;width:90px;text-align:right"><span style="letter-spacing:-0.21px">703</span> <span style="letter-spacing:-0.21px">500</span></div>
<div class="c" style="left:1747px;top:226.1px;width:102px;text-align:right"><span style="letter-spacing:-0.21px">345</span> <span style="letter-spacing:-0.21px">436</span> <span style="letter-spacing:-0.21px">000</span></div>
<div class="cb" style="left:297px;top:251px"></div>
<div class="cbc" style="left:340px;top:251px"><svg width="13" height="13" viewBox="0 0 13 13" style="left:0;top:0"><path d="M2.7 6.9 L5.3 9.5 L10 3.3" fill="none" stroke="#fff" stroke-width="1.9" stroke-linecap="butt" stroke-linejoin="miter"/></svg></div>
<div class="c" style="left:371.2px;top:248.2px;width:81.8px"><span style="letter-spacing:-0.21px">0000336</span></div>
<div class="c" style="left:457.2px;top:248.2px;width:21.8px"><span style="letter-spacing:-0.67px">ПС</span></div>
<div class="c" style="left:483.2px;top:248.2px;width:46.8px"><span style="letter-spacing:-0.34px">01.03.24</span></div>
<div class="c" style="left:534.2px;top:248.2px;width:30.8px"><span style="letter-spacing:-0.13px">11:18</span></div>
<div class="c" style="left:569.2px;top:248.2px;width:197.8px"><span style="letter-spacing:-0.47px">АВАЛОНТОРГ</span> <span style="letter-spacing:-0.29px">ООО</span></div>
<div class="c" style="left:771.2px;top:248.2px;width:198.8px"><span style="letter-spacing:-0.33px">Склад</span> <span style="letter-spacing:-0.47px">АВАЛОНТОРГ</span> <span style="letter-spacing:-0.29px">ООО</span></div>
<div class="c" style="left:974.2px;top:248.2px;width:197.8px"><span style="letter-spacing:-0.09px">ОДО</span> <span style="letter-spacing:-0.11px">"ЛюксСофтСервис"</span></div>
<div class="c" style="left:1176.2px;top:248.2px;width:197.8px"><span style="letter-spacing:0.09px">Магазин</span> <span style="letter-spacing:-0.21px">12</span></div>
<div class="c" style="left:1375px;top:248.1px;width:82px;text-align:right"><span style="letter-spacing:-0.21px">3</span></div>
<div class="c" style="left:1461px;top:248.1px;width:82px;text-align:right"><span style="letter-spacing:-0.21px">9</span></div>
<div class="c" style="left:1547px;top:248.1px;width:102px;text-align:right"><span style="letter-spacing:-0.21px">792</span></div>
<div class="c" style="left:1653px;top:248.1px;width:90px;text-align:right"><span style="letter-spacing:-0.31px">158,4</span></div>
<div class="c" style="left:1747px;top:248.1px;width:102px;text-align:right"><span style="letter-spacing:-0.31px">950,4</span></div>
<div class="cb" style="left:297px;top:273px"></div>
<div class="cbc" style="left:340px;top:273px"><svg width="13" height="13" viewBox="0 0 13 13" style="left:0;top:0"><path d="M2.7 6.9 L5.3 9.5 L10 3.3" fill="none" stroke="#fff" stroke-width="1.9" stroke-linecap="butt" stroke-linejoin="miter"/></svg></div>
<div class="c" style="left:371.2px;top:270.2px;width:81.8px"><span style="letter-spacing:-0.21px">0000337</span></div>
<div class="c" style="left:457.2px;top:270.2px;width:21.8px"><span style="letter-spacing:-0.67px">ПС</span></div>
<div class="c" style="left:483.2px;top:270.2px;width:46.8px"><span style="letter-spacing:-0.34px">12.03.24</span></div>
<div class="c" style="left:534.2px;top:270.2px;width:30.8px"><span style="letter-spacing:-0.13px">11:09</span></div>
<div class="c" style="left:569.2px;top:270.2px;width:197.8px"><span style="letter-spacing:-0.70px">БЕЛХОЗТОРГ</span> <span style="letter-spacing:-0.10px">ОАО</span></div>
<div class="c" style="left:771.2px;top:270.2px;width:198.8px"><span style="letter-spacing:-0.33px">Склад</span> <span style="letter-spacing:-0.70px">БЕЛХОЗТОРГ</span> <span style="letter-spacing:-0.10px">ОАО</span></div>
<div class="c" style="left:974.2px;top:270.2px;width:197.8px"><span style="letter-spacing:-0.09px">ОДО</span> <span style="letter-spacing:-0.11px">"ЛюксСофтСервис"</span></div>
<div class="c" style="left:1176.2px;top:270.2px;width:197.8px"><span style="letter-spacing:0.09px">Магазин</span> <span style="letter-spacing:-0.21px">12</span></div>
<div class="c" style="left:1375px;top:270.1px;width:82px;text-align:right"><span style="letter-spacing:-0.21px">1</span></div>
<div class="c" style="left:1461px;top:270.1px;width:82px;text-align:right"><span style="letter-spacing:-0.21px">4</span> <span style="letter-spacing:-0.21px">000</span></div>
<div class="c" style="left:1547px;top:270.1px;width:102px;text-align:right"><span style="letter-spacing:-0.21px">160</span></div>
<div class="c" style="left:1653px;top:270.1px;width:90px;text-align:right"><span style="letter-spacing:-0.21px">32</span></div>
<div class="c" style="left:1747px;top:270.1px;width:102px;text-align:right"><span style="letter-spacing:-0.21px">192</span></div>
<div class="cb" style="left:297px;top:295px"></div>
<div class="cbc" style="left:340px;top:295px"><svg width="13" height="13" viewBox="0 0 13 13" style="left:0;top:0"><path d="M2.7 6.9 L5.3 9.5 L10 3.3" fill="none" stroke="#fff" stroke-width="1.9" stroke-linecap="butt" stroke-linejoin="miter"/></svg></div>
<div class="c" style="left:371.2px;top:292.2px;width:81.8px"><span style="letter-spacing:-0.21px">0000338</span></div>
<div class="c" style="left:457.2px;top:292.2px;width:21.8px"><span style="letter-spacing:-0.67px">ПС</span></div>
<div class="c" style="left:483.2px;top:292.2px;width:46.8px"><span style="letter-spacing:-0.23px">11.03.24</span></div>
<div class="c" style="left:534.2px;top:292.2px;width:30.8px"><span style="letter-spacing:-0.13px">11:15</span></div>
<div class="c" style="left:569.2px;top:292.2px;width:197.8px"><span style="letter-spacing:-0.25px">AzizaDi</span></div>
<div class="c" style="left:771.2px;top:292.2px;width:198.8px"><span style="letter-spacing:-0.33px">Склад</span> <span style="letter-spacing:-0.25px">AzizaDi</span></div>
<div class="c" style="left:974.2px;top:292.2px;width:197.8px"><span style="letter-spacing:-0.09px">ОДО</span> <span style="letter-spacing:-0.11px">"ЛюксСофтСервис"</span></div>
<div class="c" style="left:1176.2px;top:292.2px;width:197.8px"><span style="letter-spacing:0.09px">Магазин</span> <span style="letter-spacing:-0.21px">12</span></div>
<div class="c" style="left:1375px;top:292.1px;width:82px;text-align:right"><span style="letter-spacing:-0.21px">1</span></div>
<div class="c" style="left:1461px;top:292.1px;width:82px;text-align:right"><span style="letter-spacing:-0.21px">100</span></div>
<div class="c" style="left:1547px;top:292.1px;width:102px;text-align:right"><span style="letter-spacing:-0.21px">5</span></div>
<div class="c" style="left:1653px;top:292.1px;width:90px;text-align:right"><span style="letter-spacing:-0.21px">1</span></div>
<div class="c" style="left:1747px;top:292.1px;width:102px;text-align:right"><span style="letter-spacing:-0.21px">6</span></div>
<div class="cb" style="left:297px;top:317px"></div>
<div class="cbc" style="left:340px;top:317px"><svg width="13" height="13" viewBox="0 0 13 13" style="left:0;top:0"><path d="M2.7 6.9 L5.3 9.5 L10 3.3" fill="none" stroke="#fff" stroke-width="1.9" stroke-linecap="butt" stroke-linejoin="miter"/></svg></div>
<div class="c" style="left:371.2px;top:314.2px;width:81.8px"><span style="letter-spacing:-0.21px">0000339</span></div>
<div class="c" style="left:457.2px;top:314.2px;width:21.8px"><span style="letter-spacing:-0.67px">ПС</span></div>
<div class="c" style="left:483.2px;top:314.2px;width:46.8px"><span style="letter-spacing:-0.34px">13.03.24</span></div>
<div class="c" style="left:534.2px;top:314.2px;width:30.8px"><span style="letter-spacing:-0.31px">17:14</span></div>
<div class="c" style="left:569.2px;top:314.2px;width:197.8px"><span style="letter-spacing:-0.25px">АГРОКОМБИНАТ</span> <span style="letter-spacing:-0.28px">КОЛОС</span> <span style="letter-spacing:-0.54px">СЗАО</span></div>
<div class="c" style="left:771.2px;top:314.2px;width:198.8px"><span style="letter-spacing:-0.33px">Склад</span> <span style="letter-spacing:-0.25px">АГРОКОМБИНАТ</span> <span style="letter-spacing:-0.28px">КОЛОС</span> <span style="letter-spacing:-0.54px">СЗАО</span></div>
<div class="c" style="left:974.2px;top:314.2px;width:197.8px"><span style="letter-spacing:-0.09px">ОДО</span> <span style="letter-spacing:-0.11px">"ЛюксСофтСервис"</span></div>
<div class="c" style="left:1176.2px;top:314.2px;width:197.8px"><span style="letter-spacing:0.09px">Магазин</span> <span style="letter-spacing:-0.21px">12</span></div>
<div class="c" style="left:1375px;top:314.1px;width:82px;text-align:right"><span style="letter-spacing:-0.21px">1</span></div>
<div class="c" style="left:1461px;top:314.1px;width:82px;text-align:right"><span style="letter-spacing:-0.21px">1</span></div>
<div class="c" style="left:1547px;top:314.1px;width:102px;text-align:right"><span style="letter-spacing:-0.21px">20</span></div>
<div class="c" style="left:1653px;top:314.1px;width:90px;text-align:right"><span style="letter-spacing:-0.21px">4</span></div>
<div class="c" style="left:1747px;top:314.1px;width:102px;text-align:right"><span style="letter-spacing:-0.21px">24</span></div>
<div class="cb" style="left:297px;top:339px"></div>
<div class="cbc" style="left:340px;top:339px"><svg width="13" height="13" viewBox="0 0 13 13" style="left:0;top:0"><path d="M2.7 6.9 L5.3 9.5 L10 3.3" fill="none" stroke="#fff" stroke-width="1.9" stroke-linecap="butt" stroke-linejoin="miter"/></svg></div>
<div class="c" style="left:371.2px;top:336.2px;width:81.8px"><span style="letter-spacing:-0.08px">0000118</span></div>
<div class="c" style="left:457.2px;top:336.2px;width:21.8px"><span style="letter-spacing:-0.67px">ПС</span></div>
<div class="c" style="left:483.2px;top:336.2px;width:46.8px"><span style="letter-spacing:-0.34px">13.03.24</span></div>
<div class="c" style="left:534.2px;top:336.2px;width:30.8px"><span style="letter-spacing:-0.13px">11:14</span></div>
<div class="c" style="left:569.2px;top:336.2px;width:197.8px"><span style="letter-spacing:-0.09px">ОДО</span> <span style="letter-spacing:-0.11px">"ЛюксСофтСервис"</span></div>
<div class="c" style="left:771.2px;top:336.2px;width:198.8px"><span style="letter-spacing:0.09px">Магазин</span> <span style="letter-spacing:-0.21px">12</span></div>
<div class="c" style="left:974.2px;top:336.2px;width:197.8px"><span style="letter-spacing:-0.35px">ЗАО</span> <span style="letter-spacing:0.07px">"ЛюксСофтТорг"</span></div>
<div class="c" style="left:1176.2px;top:336.2px;width:197.8px"><span style="letter-spacing:-0.11px">ЛюксСофтТрейд2</span></div>
<div class="c" style="left:1375px;top:336.1px;width:82px;text-align:right"><span style="letter-spacing:-0.21px">1</span></div>
<div class="c" style="left:1461px;top:336.1px;width:82px;text-align:right"><span style="letter-spacing:-0.21px">1</span></div>
<div class="c" style="left:1547px;top:336.1px;width:102px;text-align:right"><span style="letter-spacing:-0.29px">169,99</span></div>
<div class="c" style="left:1653px;top:336.1px;width:90px;text-align:right"><span style="letter-spacing:-0.21px">34</span></div>
<div class="c" style="left:1747px;top:336.1px;width:102px;text-align:right"><span style="letter-spacing:-0.29px">203,99</span></div>
<div class="cb" style="left:297px;top:361px"></div>
<div class="cbc" style="left:340px;top:361px"><svg width="13" height="13" viewBox="0 0 13 13" style="left:0;top:0"><path d="M2.7 6.9 L5.3 9.5 L10 3.3" fill="none" stroke="#fff" stroke-width="1.9" stroke-linecap="butt" stroke-linejoin="miter"/></svg></div>
<div class="c" style="left:371.2px;top:358.2px;width:81.8px"><span style="letter-spacing:-0.21px">0000340</span></div>
<div class="c" style="left:457.2px;top:358.2px;width:21.8px"><span style="letter-spacing:-0.67px">ПС</span></div>
<div class="c" style="left:483.2px;top:358.2px;width:46.8px"><span style="letter-spacing:-0.34px">13.03.24</span></div>
<div class="c" style="left:534.2px;top:358.2px;width:30.8px"><span style="letter-spacing:-0.31px">17:23</span></div>
<div class="c" style="left:569.2px;top:358.2px;width:197.8px"><span style="letter-spacing:-0.48px">ГП</span> <span style="letter-spacing:-0.31px">МОГОСТ</span></div>
<div class="c" style="left:771.2px;top:358.2px;width:198.8px"><span style="letter-spacing:-0.33px">Склад</span> <span style="letter-spacing:-0.48px">ГП</span> <span style="letter-spacing:-0.31px">МОГОСТ</span></div>
<div class="c" style="left:974.2px;top:358.2px;width:197.8px"><span style="letter-spacing:-0.09px">ОДО</span> <span style="letter-spacing:-0.11px">"ЛюксСофтСервис"</span></div>
<div class="c" style="left:1176.2px;top:358.2px;width:197.8px"><span style="letter-spacing:0.09px">Магазин</span> <span style="letter-spacing:-0.21px">12</span></div>
<div class="c" style="left:1375px;top:358.1px;width:82px;text-align:right"><span style="letter-spacing:-0.21px">4</span></div>
<div class="c" style="left:1461px;top:358.1px;width:82px;text-align:right"><span style="letter-spacing:-0.21px">5</span></div>
<div class="c" style="left:1547px;top:358.1px;width:102px;text-align:right"><span style="letter-spacing:-0.31px">88,98</span></div>
<div class="c" style="left:1653px;top:358.1px;width:90px;text-align:right"><span style="letter-spacing:-0.34px">17,6</span></div>
<div class="c" style="left:1747px;top:358.1px;width:102px;text-align:right"><span style="letter-spacing:-0.29px">106,58</span></div>
<div class="cb" style="left:297px;top:383px"></div>
<div class="cbc" style="left:340px;top:383px"><svg width="13" height="13" viewBox="0 0 13 13" style="left:0;top:0"><path d="M2.7 6.9 L5.3 9.5 L10 3.3" fill="none" stroke="#fff" stroke-width="1.9" stroke-linecap="butt" stroke-linejoin="miter"/></svg></div>
<div class="c" style="left:371.2px;top:380.2px;width:81.8px"><span style="letter-spacing:-0.13px">002-202102398</span></div>
<div class="c" style="left:483.2px;top:380.2px;width:46.8px"><span style="letter-spacing:-0.34px">13.03.24</span></div>
<div class="c" style="left:534.2px;top:380.2px;width:30.8px"><span style="letter-spacing:-0.31px">00:00</span></div>
<div class="c" style="left:569.2px;top:380.2px;width:197.8px"><span style="letter-spacing:-0.48px">ГП</span> <span style="letter-spacing:-0.31px">МОГОСТ</span></div>
<div class="c" style="left:771.2px;top:380.2px;width:198.8px"><span style="letter-spacing:-0.33px">Склад</span> <span style="letter-spacing:-0.48px">ГП</span> <span style="letter-spacing:-0.31px">МОГОСТ</span></div>
<div class="c" style="left:974.2px;top:380.2px;width:197.8px"><span style="letter-spacing:-0.09px">ОДО</span> <span style="letter-spacing:-0.11px">"ЛюксСофтСервис"</span></div>
<div class="c" style="left:1176.2px;top:380.2px;width:197.8px"><span style="letter-spacing:0.09px">Магазин</span> <span style="letter-spacing:-0.21px">12</span></div>
<div class="c" style="left:1375px;top:380.1px;width:82px;text-align:right"><span style="letter-spacing:-0.21px">1</span></div>
<div class="c" style="left:1461px;top:380.1px;width:82px;text-align:right"><span style="letter-spacing:-0.21px">4</span></div>
<div class="c" style="left:1547px;top:380.1px;width:102px;text-align:right"><span style="letter-spacing:-0.21px">800</span></div>
<div class="c" style="left:1653px;top:380.1px;width:90px;text-align:right"><span style="letter-spacing:-0.21px">160</span></div>
<div class="c" style="left:1747px;top:380.1px;width:102px;text-align:right"><span style="letter-spacing:-0.21px">960</span></div>
<div class="cb" style="left:297px;top:405px"></div>
<div class="cbc" style="left:340px;top:405px"><svg width="13" height="13" viewBox="0 0 13 13" style="left:0;top:0"><path d="M2.7 6.9 L5.3 9.5 L10 3.3" fill="none" stroke="#fff" stroke-width="1.9" stroke-linecap="butt" stroke-linejoin="miter"/></svg></div>
<div class="c" style="left:371.2px;top:402.2px;width:81.8px"><span style="letter-spacing:-0.21px">0000341</span></div>
<div class="c" style="left:457.2px;top:402.2px;width:21.8px"><span style="letter-spacing:-0.67px">ПС</span></div>
<div class="c" style="left:483.2px;top:402.2px;width:46.8px"><span style="letter-spacing:-0.34px">13.03.24</span></div>
<div class="c" style="left:534.2px;top:402.2px;width:30.8px"><span style="letter-spacing:-0.31px">10:58</span></div>
<div class="c" style="left:569.2px;top:402.2px;width:197.8px"><span style="letter-spacing:-0.90px">АЗЕРБЕЛТРЕЙД</span> <span style="letter-spacing:-0.29px">ООО</span></div>
<div class="c" style="left:771.2px;top:402.2px;width:198.8px"><span style="letter-spacing:-0.33px">Склад</span> <span style="letter-spacing:-0.90px">АЗЕРБЕЛТРЕЙД</span> <span style="letter-spacing:-0.29px">ООО</span></div>
<div class="c" style="left:974.2px;top:402.2px;width:197.8px"><span style="letter-spacing:-0.29px">ООО</span> <span style="letter-spacing:-0.03px">"ЛюксСофтТрейд"</span></div>
<div class="c" style="left:1176.2px;top:402.2px;width:197.8px"><span style="letter-spacing:-0.10px">ЛюксСофтТрейд</span> <span style="letter-spacing:-0.14px">Доставка</span></div>
<div class="c" style="left:1375px;top:402.1px;width:82px;text-align:right"><span style="letter-spacing:-0.21px">3</span></div>
<div class="c" style="left:1461px;top:402.1px;width:82px;text-align:right"><span style="letter-spacing:-0.21px">6</span></div>
<div class="c" style="left:1547px;top:402.1px;width:102px;text-align:right"><span style="letter-spacing:-0.21px">120</span></div>
<div class="c" style="left:1653px;top:402.1px;width:90px;text-align:right"><span style="letter-spacing:-0.21px">16</span></div>
<div class="c" style="left:1747px;top:402.1px;width:102px;text-align:right"><span style="letter-spacing:-0.21px">136</span></div>
<div class="cb" style="left:297px;top:427px"></div>
<div class="cbc" style="left:340px;top:427px"><svg width="13" height="13" viewBox="0 0 13 13" style="left:0;top:0"><path d="M2.7 6.9 L5.3 9.5 L10 3.3" fill="none" stroke="#fff" stroke-width="1.9" stroke-linecap="butt" stroke-linejoin="miter"/></svg></div>
<div class="c" style="left:371.2px;top:424.2px;width:81.8px"><span style="letter-spacing:-0.21px">7583728</span></div>
<div class="c" style="left:457.2px;top:424.2px;width:21.8px"><span style="letter-spacing:-0.67px">ПС</span></div>
<div class="c" style="left:483.2px;top:424.2px;width:46.8px"><span style="letter-spacing:-0.34px">13.03.24</span></div>
<div class="c" style="left:534.2px;top:424.2px;width:30.8px"><span style="letter-spacing:-0.31px">18:22</span></div>
<div class="c" style="left:569.2px;top:424.2px;width:197.8px"><span style="letter-spacing:-0.35px">ЗАО</span> <span style="letter-spacing:0.07px">"ЛюксСофтТорг"</span></div>
<div class="c" style="left:771.2px;top:424.2px;width:198.8px"><span style="letter-spacing:-0.11px">ЛюксСофтТрейд2</span></div>
<div class="c" style="left:974.2px;top:424.2px;width:197.8px"><span style="letter-spacing:-0.35px">ЗАО</span> <span style="letter-spacing:0.07px">"ЛюксСофтТорг"</span></div>
<div class="c" style="left:1176.2px;top:424.2px;width:197.8px"><span style="letter-spacing:0.09px">Магазин</span> <span style="letter-spacing:-0.21px">13</span></div>
<div class="c" style="left:1375px;top:424.1px;width:82px;text-align:right"><span style="letter-spacing:-0.21px">2</span></div>
<div class="c" style="left:1461px;top:424.1px;width:82px;text-align:right"><span style="letter-spacing:-0.21px">35</span></div>
<div class="c" style="left:1547px;top:424.1px;width:102px;text-align:right"><span style="letter-spacing:-0.29px">184,65</span></div>
<div class="c" style="left:1653px;top:424.1px;width:90px;text-align:right"><span style="letter-spacing:-0.31px">36,93</span></div>
<div class="c" style="left:1747px;top:424.1px;width:102px;text-align:right"><span style="letter-spacing:-0.29px">221,58</span></div>
<div class="cb" style="left:297px;top:449px"></div>
<div class="cbc" style="left:340px;top:449px"><svg width="13" height="13" viewBox="0 0 13 13" style="left:0;top:0"><path d="M2.7 6.9 L5.3 9.5 L10 3.3" fill="none" stroke="#fff" stroke-width="1.9" stroke-linecap="butt" stroke-linejoin="miter"/></svg></div>
<div class="c" style="left:371.2px;top:446.2px;width:81.8px"><span style="letter-spacing:-0.21px">0000342</span></div>
<div class="c" style="left:457.2px;top:446.2px;width:21.8px"><span style="letter-spacing:-0.67px">ПС</span></div>
<div class="c" style="left:483.2px;top:446.2px;width:46.8px"><span style="letter-spacing:-0.34px">13.03.24</span></div>
<div class="c" style="left:534.2px;top:446.2px;width:30.8px"><span style="letter-spacing:-0.31px">19:31</span></div>
<div class="c" style="left:569.2px;top:446.2px;width:197.8px"><span style="letter-spacing:-0.35px">ЗАО</span> <span style="letter-spacing:0.07px">"ЛюксСофтТорг"</span></div>
<div class="c" style="left:771.2px;top:446.2px;width:198.8px"><span style="letter-spacing:-0.11px">ЛюксСофтТрейд2</span></div>
<div class="c" style="left:974.2px;top:446.2px;width:197.8px"><span style="letter-spacing:-0.35px">ЗАО</span> <span style="letter-spacing:0.07px">"ЛюксСофтТорг"</span></div>
<div class="c" style="left:1176.2px;top:446.2px;width:197.8px"><span style="letter-spacing:0.09px">Магазин</span> <span style="letter-spacing:-0.21px">13</span></div>
<div class="c" style="left:1375px;top:446.1px;width:82px;text-align:right"><span style="letter-spacing:-0.21px">2</span></div>
<div class="c" style="left:1461px;top:446.1px;width:82px;text-align:right"><span style="letter-spacing:-0.21px">35</span></div>
<div class="c" style="left:1547px;top:446.1px;width:102px;text-align:right"><span style="letter-spacing:-0.29px">184,65</span></div>
<div class="c" style="left:1653px;top:446.1px;width:90px;text-align:right"><span style="letter-spacing:-0.31px">36,93</span></div>
<div class="c" style="left:1747px;top:446.1px;width:102px;text-align:right"><span style="letter-spacing:-0.29px">221,58</span></div>
<div class="cb" style="left:297px;top:471px"></div>
<div class="cb" style="left:340px;top:471px"></div>
<div class="c" style="left:371.2px;top:468.2px;width:81.8px"><span style="letter-spacing:-0.21px">0000343</span></div>
<div class="c" style="left:457.2px;top:468.2px;width:21.8px"><span style="letter-spacing:-0.67px">ПС</span></div>
<div class="c" style="left:483.2px;top:468.2px;width:46.8px"><span style="letter-spacing:-0.34px">13.03.24</span></div>
<div class="c" style="left:534.2px;top:468.2px;width:30.8px"><span style="letter-spacing:-0.31px">19:36</span></div>
<div class="c" style="left:569.2px;top:468.2px;width:197.8px"><span style="letter-spacing:-0.53px">ЯРМАРКА</span> <span style="letter-spacing:-0.64px">ВКУСА</span> <span style="letter-spacing:-0.29px">ООО</span></div>
<div class="c" style="left:771.2px;top:468.2px;width:198.8px"><span style="letter-spacing:-0.33px">Склад</span> <span style="letter-spacing:-0.53px">ЯРМАРКА</span> <span style="letter-spacing:-0.64px">ВКУСА</span> <span style="letter-spacing:-0.29px">ООО</span></div>
<div class="c" style="left:974.2px;top:468.2px;width:197.8px"><span style="letter-spacing:-0.35px">ЗАО</span> <span style="letter-spacing:0.07px">"ЛюксСофтТорг"</span></div>
<div class="c" style="left:1375px;top:468.1px;width:82px;text-align:right"><span style="letter-spacing:-0.21px">1</span></div>
<div class="c" style="left:1461px;top:468.1px;width:82px;text-align:right"><span style="letter-spacing:-0.21px">1</span></div>
<div class="a" style="left:1853px;top:393px;width:8px;height:95px;background:#dbdbdb"></div>
<div class="hl" style="left:282px;top:224px;width:1570px"></div>
<div class="a" style="left:282px;top:219px;width:1570px;height:5px;overflow:hidden"><div class="cb" style="left:15px;top:-10px"></div><div class="cbc" style="left:58px;top:-10px"></div></div>
<div class="a" style="left:453px;top:379px;width:1px;height:21px;background:#d7e5ea"></div>
<svg width="5" height="5" viewBox="0 0 5 5" style="left:762px;top:213px"><path d="M5 0 V5 H0 Z" fill="#f0151f"/></svg>
<div class="a" style="left:767px;top:379px;width:1px;height:21px;background:#2d6fb0"></div>
<div class="a" style="left:281px;top:494px;width:28px;height:22px;background:#d7e5ea;border-radius:4px"></div>
<svg width="16" height="16" viewBox="0 0 16 16" style="left:286.5px;top:497px"><circle cx="2.5" cy="3.3" r="1.5" fill="none" stroke="#4fb0ea" stroke-width="1.2" stroke-linecap="round" stroke-linejoin="round"/><circle cx="2.5" cy="8.2" r="1.5" fill="none" stroke="#4fb0ea" stroke-width="1.2" stroke-linecap="round" stroke-linejoin="round"/><circle cx="2.5" cy="13.1" r="1.5" fill="none" stroke="#4fb0ea" stroke-width="1.2" stroke-linecap="round" stroke-linejoin="round"/><path d="M7.2 3.5 H15.8 M7.2 8.5 H15.8 M7.2 13.5 H15.8" fill="none" stroke="#2e2e2e" stroke-width="1.2" stroke-linecap="round" stroke-linejoin="round"/></svg>
<svg width="16" height="16" viewBox="0 0 16 16" style="left:315px;top:497px"><path d="M5.6 1 V15 M10.6 1 V15 M1 5.6 H15 M1 10.6 H15" fill="none" stroke="#4fb0ea" stroke-width="1.2" stroke-linecap="round" stroke-linejoin="round"/><rect x="0.65" y="0.65" width="14.7" height="14.7" rx="0.8" fill="none" stroke="#2e2e2e" stroke-width="1.2" stroke-linecap="round" stroke-linejoin="round"/></svg>
<svg width="16" height="16" viewBox="0 0 16 16" style="left:343px;top:497px"><rect x="0.65" y="2.65" width="14.7" height="12.7" rx="1.8" fill="none" stroke="#2e2e2e" stroke-width="1.2" stroke-linecap="round" stroke-linejoin="round"/><path d="M0.7 5.5 H15.3 M4.5 0.7 V2.6 M11.5 0.7 V2.6" fill="none" stroke="#2e2e2e" stroke-width="1.2" stroke-linecap="round" stroke-linejoin="round"/><path d="M3.6 10.5 H12.4 M5.5 7.8 V13.2 M10.5 7.8 V13.2" fill="none" stroke="#4fb0ea" stroke-width="1.2" stroke-linecap="round" stroke-linejoin="round"/></svg>
<svg width="16" height="16" viewBox="0 0 16 16" style="left:375.5px;top:497px"><path d="M0.6 2.5 H14.8" fill="none" stroke="#2e2e2e" stroke-width="1.2" stroke-linecap="round" stroke-linejoin="round"/><path d="M2.6 6.5 H12.8" fill="none" stroke="#4fb0ea" stroke-width="1.2" stroke-linecap="round" stroke-linejoin="round"/><path d="M4.3 10.5 H10.6" fill="none" stroke="#2e2e2e" stroke-width="1.2" stroke-linecap="round" stroke-linejoin="round"/><path d="M6.4 14.5 H8.8" fill="none" stroke="#4fb0ea" stroke-width="1.2" stroke-linecap="round" stroke-linejoin="round"/></svg>
<svg width="16" height="16" viewBox="0 0 16 16" style="left:407px;top:497px"><path d="M15.27 10.21 L14.70 11.58 L12.33 11.55 L11.55 12.33 L11.58 14.70 L10.21 15.27 L8.55 13.57 L7.45 13.57 L5.79 15.27 L4.42 14.70 L4.45 12.33 L3.67 11.55 L1.30 11.58 L0.73 10.21 L2.43 8.55 L2.43 7.45 L0.73 5.79 L1.30 4.42 L3.67 4.45 L4.45 3.67 L4.42 1.30 L5.79 0.73 L7.45 2.43 L8.55 2.43 L10.21 0.73 L11.58 1.30 L11.55 3.67 L12.33 4.45 L14.70 4.42 L15.27 5.79 L13.57 7.45 L13.57 8.55 Z" fill="none" stroke="#2e2e2e" stroke-width="1.2" stroke-linecap="round" stroke-linejoin="round"/><circle cx="8" cy="8" r="2.3" fill="none" stroke="#4fb0ea" stroke-width="1.2" stroke-linecap="round" stroke-linejoin="round"/></svg>
<svg width="16" height="16" viewBox="0 0 16 16" style="left:439.5px;top:497px"><path d="M1 1.2 V3.6 M0.6 6.8 Q1.6 6.2 1.8 7.2 L0.6 9 H2 M0.6 12.2 H1.8 L1 13.2 Q2 13.6 1.6 14.6 L0.6 14.8" fill="none" stroke="#4fb0ea" stroke-width="0.9" stroke-linecap="round"/><path d="M6 2.5 H15 M6 8.5 H15 M6 14.5 H15" fill="none" stroke="#2e2e2e" stroke-width="1.2" stroke-linecap="round" stroke-linejoin="round"/></svg>
<svg width="16" height="16" viewBox="0 0 16 16" style="left:467px;top:497px"><path d="M0.7 1.5 H15.3 M0.7 5.5 H15.3 M0.7 9.5 H6.6 M0.7 13.5 H6.6" fill="none" stroke="#2e2e2e" stroke-width="1.2" stroke-linecap="round" stroke-linejoin="round"/><path d="M9.2 11.5 H15.8 M12.5 8.2 V14.8" fill="none" stroke="#4fb0ea" stroke-width="1.2" stroke-linecap="round" stroke-linejoin="round"/></svg>
<svg width="16" height="16" viewBox="0 0 16 16" style="left:499px;top:497px"><path d="M8.5 3.6 H0.8 V15.2 H12.4 V8" fill="none" stroke="#2e2e2e" stroke-width="1.2" stroke-linecap="round" stroke-linejoin="round"/><path d="M6.6 9.4 L15 1 M10 0.8 H15.2 V6" fill="none" stroke="#4fb0ea" stroke-width="1.2" stroke-linecap="round" stroke-linejoin="round"/></svg>
<svg width="16" height="16" viewBox="0 0 16 16" style="left:531px;top:497px"><path d="M4.5 3.4 H0.8 V12.6 H2 M2 3.4 H10.6 M8 0.7 L10.8 3.4 L8 6.2" fill="none" stroke="#2e2e2e" stroke-width="1.2" stroke-linecap="round" stroke-linejoin="round"/><path d="M15.4 4.6 V12.6 H6.2 M9 9.8 L6 12.6 L9 15.4" fill="none" stroke="#4fb0ea" stroke-width="1.2" stroke-linecap="round" stroke-linejoin="round"/></svg>
<div class="cbc" style="left:1317px;top:498px"><svg width="13" height="13" viewBox="0 0 13 13" style="left:0;top:0"><path d="M2.7 6.9 L5.3 9.5 L10 3.3" fill="none" stroke="#fff" stroke-width="1.9" stroke-linecap="butt" stroke-linejoin="miter"/></svg></div>
<div class="t" style="left:1333.5px;top:498.5px;"><span style="letter-spacing:-0.18px">Накладные,</span> <span style="letter-spacing:0.32px">по</span> <span style="letter-spacing:0.31px">которым</span> <span style="letter-spacing:-0.09px">не</span> <span style="letter-spacing:0.04px">было</span> <span style="letter-spacing:0.19px">дооценки</span> <span style="letter-spacing:-0.61px">(F9)</span></div>
<div class="btn" style="left:1599px;top:494px;width:129px;height:22px"></div>
<div class="t" style="left:1615px;top:497.5px;"><span style="letter-spacing:-0.16px">Создать</span> <span style="letter-spacing:0.13px">дооценку</span></div>
<div class="btn" style="left:1734px;top:494px;width:128px;height:22px"></div>
<div class="t" style="left:1766.5px;top:497.5px;"><span style="letter-spacing:-0.07px">Редактировать</span></div>
<svg width="13" height="13" viewBox="0 0 13 13" style="left:1747.5px;top:499px"><path d="M8.8 0.8 L11.4 3.4 L4.4 10.2 L1.2 11 L2 7.8 Z" fill="none" stroke="#2e2e2e" stroke-width="1" stroke-linejoin="round"/><path d="M0.6 12.4 H11.6" stroke="#4fb0ea" stroke-width="1"/></svg>
<div class="a" style="left:281px;top:529px;width:1581px;height:1px;background:#d8d8d8"></div>
<div class="leg" style="left:283.5px;top:523px;padding:0 2px 0 20.0px;"><span style="letter-spacing:-0.01px">Акт</span> <span style="letter-spacing:0.11px">переоценки</span></div>
<svg width="10" height="10" viewBox="0 0 10 10" style="left:287.5px;top:524.7px"><circle cx="5" cy="5" r="4.2" fill="none" stroke="#9a9a9a" stroke-width="0.9"/><path d="M2.6 5 H7.4" stroke="#9a9a9a" stroke-width="0.9"/></svg>
<div class="a" style="left:281px;top:544px;width:1581px;height:327px;border:1px solid #c9c9c9;border-radius:3px;box-sizing:border-box;background:#fff;overflow:hidden"></div>
<div class="a" style="left:282px;top:545px;width:1579px;height:54px;background:#f3f3f3;border-radius:2px 0 0 0"></div>
<div class="a" style="left:282px;top:599px;width:1579px;height:1px;background:#dcdcdc"></div>
<div class="hl" style="left:282px;top:621px;width:1579px"></div>
<div class="a" style="left:1498px;top:622px;width:123px;height:21px;background:#fdfd86"></div>
<div class="hl" style="left:282px;top:643px;width:1579px"></div>
<div class="a" style="left:1498px;top:644px;width:123px;height:21px;background:#fdfd86"></div>
<div class="hl" style="left:282px;top:665px;width:1579px"></div>
<div class="a" style="left:1374px;top:666px;width:123px;height:21px;background:#d4fdd2"></div>
<div class="a" style="left:1498px;top:666px;width:123px;height:21px;background:#d4fdd2"></div>
<div class="hl" style="left:282px;top:687px;width:1579px"></div>
<div class="a" style="left:282px;top:688px;width:1579px;height:21px;background:#d7e5ea"></div>
<div class="a" style="left:1498px;top:688px;width:123px;height:21px;background:#d5e3a6"></div>
<div class="hl" style="left:282px;top:709px;width:1579px"></div>
<div class="a" style="left:1374px;top:710px;width:123px;height:21px;background:#d4fdd2"></div>
<div class="a" style="left:1498px;top:710px;width:123px;height:21px;background:#d4fdd2"></div>
<div class="hl" style="left:282px;top:731px;width:1579px"></div>
<div class="a" style="left:1374px;top:732px;width:123px;height:21px;background:#d4fdd2"></div>
<div class="a" style="left:1498px;top:732px;width:123px;height:21px;background:#d4fdd2"></div>
<div class="hl" style="left:282px;top:753px;width:1579px"></div>
<div class="a" style="left:1498px;top:754px;width:123px;height:21px;background:#d4fdd2"></div>
<div class="hl" style="left:282px;top:775px;width:1579px"></div>
<div class="a" style="left:1374px;top:776px;width:123px;height:21px;background:#d4fdd2"></div>
<div class="a" style="left:1498px;top:776px;width:123px;height:21px;background:#d4fdd2"></div>
<div class="hl" style="left:282px;top:797px;width:1579px"></div>
<div class="a" style="left:1374px;top:798px;width:123px;height:21px;background:#d4fdd2"></div>
<div class="a" style="left:1498px;top:798px;width:123px;height:21px;background:#d4fdd2"></div>
<div class="hl" style="left:282px;top:819px;width:1579px"></div>
<div class="a" style="left:1374px;top:820px;width:123px;height:21px;background:#d4fdd2"></div>
<div class="a" style="left:1498px;top:820px;width:123px;height:21px;background:#d4fdd2"></div>
<div class="hl" style="left:282px;top:841px;width:1579px"></div>
<div class="vl" style="left:324px;top:545px;height:297px"></div>
<div class="vl" style="left:393px;top:545px;height:297px"></div>
<div class="vl" style="left:419px;top:545px;height:297px"></div>
<div class="vl" style="left:470px;top:545px;height:297px"></div>
<div class="vl" style="left:505px;top:545px;height:297px"></div>
<div class="vl" style="left:556px;top:545px;height:297px"></div>
<div class="vl" style="left:719px;top:545px;height:297px"></div>
<div class="vl" style="left:788px;top:545px;height:297px"></div>
<div class="vl" style="left:873px;top:545px;height:297px"></div>
<div class="vl" style="left:958px;top:545px;height:297px"></div>
<div class="vl" style="left:1044px;top:545px;height:297px"></div>
<div class="vl" style="left:1129px;top:545px;height:297px"></div>
<div class="vl" style="left:1330px;top:545px;height:297px"></div>
<div class="vl" style="left:1373px;top:545px;height:297px"></div>
<div class="vl" style="left:1497px;top:545px;height:297px"></div>
<div class="vl" style="left:1621px;top:545px;height:297px"></div>
<div class="vl" style="left:1861px;top:545px;height:297px"></div>
<div class="a" style="left:281px;top:544px;width:1581px;height:327px;border:1px solid #c9c9c9;border-radius:3px;box-sizing:border-box;z-index:3"></div>
<div class="h" style="left:282px;top:546.2px;width:42px;height:54px;letter-spacing:0.05px"><span>Прове<br>ден</span></div>
<div class="h" style="left:325px;top:546.2px;width:68px;height:54px;letter-spacing:0.07px"><span>Номер</span></div>
<div class="h" style="left:394px;top:546.2px;width:25px;height:54px;letter-spacing:-0.26px"><span>Сер<br>ия</span></div>
<div class="h" style="left:420px;top:546.2px;width:50px;height:54px;letter-spacing:-0.08px"><span>Дата<br>докуме<br>нта</span></div>
<div class="h" style="left:471px;top:546.2px;width:34px;height:54px;letter-spacing:-0.05px"><span>Врем<br>я<br>доку</span></div>
<div class="h" style="left:506px;top:546.2px;width:50px;height:54px;letter-spacing:-0.08px"><span>Дата<br>докуме<br>нта (до)</span></div>
<div class="h" style="left:557px;top:546.2px;width:162px;height:54px;letter-spacing:-0.33px"><span>Склад</span></div>
<div class="h" style="left:720px;top:546.2px;width:68px;height:54px;letter-spacing:0.20px"><span>Кол-во<br>строк</span></div>
<div class="h" style="left:789px;top:546.2px;width:84px;height:54px;letter-spacing:-0.09px"><span>Сумма<br>изменения<br>поставщика</span></div>
<div class="h" style="left:874px;top:546.2px;width:84px;height:54px;letter-spacing:-0.07px"><span>Сумма<br>изменения<br>надбавки</span></div>
<div class="h" style="left:959px;top:546.2px;width:85px;height:54px;letter-spacing:-0.18px"><span>Сумма<br>изменения<br>НДС</span></div>
<div class="h" style="left:1045px;top:546.2px;width:84px;height:54px;letter-spacing:0.01px"><span>Сумма<br>изменения<br>розничной</span></div>
<div class="h" style="left:1130px;top:546.2px;width:200px;height:54px;letter-spacing:0.00px"><span>№ распоряжения на переоценку</span></div>
<div class="h" style="left:1331px;top:546.2px;width:42px;height:54px;letter-spacing:-0.10px"><span><span style="position:relative;top:-2.8px">Не<br>измен<br>ять</span></span></div>
<div class="h" style="left:1374px;top:546.2px;width:123px;height:54px;letter-spacing:-0.14px"><span>Статус печати<br>ценника</span></div>
<div class="h" style="left:1498px;top:546.2px;width:123px;height:54px;letter-spacing:-0.02px"><span>Статус загрузки в<br>оборудование</span></div>
<div class="h" style="left:1622px;top:546.2px;width:239px;height:54px;letter-spacing:-0.01px"><span>Примечание</span></div>
<div class="cbc" style="left:297px;top:604px"><svg width="13" height="13" viewBox="0 0 13 13" style="left:0;top:0"><path d="M2.7 6.9 L5.3 9.5 L10 3.3" fill="none" stroke="#fff" stroke-width="1.9" stroke-linecap="butt" stroke-linejoin="miter"/></svg></div>
<div class="c" style="left:328.2px;top:601.2px;width:64.8px"><span style="letter-spacing:-0.14px">п100041</span></div>
<div class="c" style="left:423.2px;top:601.2px;width:46.8px"><span style="letter-spacing:-0.34px">13.03.24</span></div>
<div class="c" style="left:474.2px;top:601.2px;width:30.8px"><span style="letter-spacing:-0.31px">12:37</span></div>
<div class="c" style="left:509.2px;top:601.2px;width:46.8px"><span style="letter-spacing:-0.34px">13.03.24</span></div>
<div class="c" style="left:560.2px;top:601.2px;width:158.8px"><span style="letter-spacing:0.09px">Магазин</span> <span style="letter-spacing:-0.21px">13</span></div>
<div class="c" style="left:720px;top:601.1px;width:65px;text-align:right"><span style="letter-spacing:-0.21px">1</span></div>
<div class="c" style="left:874px;top:601.1px;width:81px;text-align:right"><span style="letter-spacing:-0.31px">34,85</span></div>
<div class="c" style="left:959px;top:601.1px;width:82px;text-align:right"><span style="letter-spacing:-0.34px">6,97</span></div>
<div class="c" style="left:1045px;top:601.1px;width:81px;text-align:right"><span style="letter-spacing:-0.31px">41,82</span></div>
<div class="cb" style="left:1346px;top:604px"></div>
<div class="c" style="left:1377.2px;top:601.2px;width:119.8px"><span style="letter-spacing:-0.24px">Распечатан</span></div>
<div class="c" style="left:1501.2px;top:601.2px;width:119.8px"><span style="letter-spacing:0.05px">Успешно</span> <span style="letter-spacing:0.06px">загружен</span></div>
<div class="cbc" style="left:297px;top:626px"><svg width="13" height="13" viewBox="0 0 13 13" style="left:0;top:0"><path d="M2.7 6.9 L5.3 9.5 L10 3.3" fill="none" stroke="#fff" stroke-width="1.9" stroke-linecap="butt" stroke-linejoin="miter"/></svg></div>
<div class="c" style="left:328.2px;top:623.2px;width:64.8px"><span style="letter-spacing:-0.14px">п100049</span></div>
<div class="c" style="left:423.2px;top:623.2px;width:46.8px"><span style="letter-spacing:-0.34px">13.03.24</span></div>
<div class="c" style="left:474.2px;top:623.2px;width:30.8px"><span style="letter-spacing:-0.31px">16:27</span></div>
<div class="c" style="left:509.2px;top:623.2px;width:46.8px"><span style="letter-spacing:-0.34px">13.03.24</span></div>
<div class="c" style="left:560.2px;top:623.2px;width:158.8px"><span style="letter-spacing:0.09px">Магазин</span> <span style="letter-spacing:-0.21px">3</span></div>
<div class="c" style="left:720px;top:623.1px;width:65px;text-align:right"><span style="letter-spacing:-0.21px">2</span></div>
<div class="c" style="left:789px;top:623.1px;width:81px;text-align:right"><span style="letter-spacing:-0.14px">-127,83</span></div>
<div class="c" style="left:874px;top:623.1px;width:81px;text-align:right"><span style="letter-spacing:-0.12px">-49,38</span></div>
<div class="c" style="left:959px;top:623.1px;width:82px;text-align:right"><span style="letter-spacing:-0.12px">-35,45</span></div>
<div class="c" style="left:1045px;top:623.1px;width:81px;text-align:right"><span style="letter-spacing:-0.14px">-212,66</span></div>
<div class="cb" style="left:1346px;top:626px"></div>
<div class="c" style="left:1377.2px;top:623.2px;width:119.8px"><span style="letter-spacing:-0.24px">Распечатан</span></div>
<div class="c" style="left:1501.2px;top:623.2px;width:119.8px"><span style="letter-spacing:0.02px">Принят</span> <span style="letter-spacing:0.60px">к</span> <span style="letter-spacing:0.05px">загрузке</span></div>
<div class="cbc" style="left:297px;top:648px"><svg width="13" height="13" viewBox="0 0 13 13" style="left:0;top:0"><path d="M2.7 6.9 L5.3 9.5 L10 3.3" fill="none" stroke="#fff" stroke-width="1.9" stroke-linecap="butt" stroke-linejoin="miter"/></svg></div>
<div class="c" style="left:328.2px;top:645.2px;width:64.8px"><span style="letter-spacing:-0.21px">00419</span></div>
<div class="c" style="left:397.2px;top:645.2px;width:21.8px"><span style="letter-spacing:-0.20px">ПО</span></div>
<div class="c" style="left:423.2px;top:645.2px;width:46.8px"><span style="letter-spacing:-0.34px">13.03.24</span></div>
<div class="c" style="left:474.2px;top:645.2px;width:30.8px"><span style="letter-spacing:-0.31px">00:00</span></div>
<div class="c" style="left:509.2px;top:645.2px;width:46.8px"><span style="letter-spacing:-0.34px">12.03.24</span></div>
<div class="c" style="left:560.2px;top:645.2px;width:158.8px"><span style="letter-spacing:-0.11px">ЛюксСофтТрейд2</span></div>
<div class="c" style="left:720px;top:645.1px;width:65px;text-align:right"><span style="letter-spacing:-0.21px">2</span></div>
<div class="c" style="left:874px;top:645.1px;width:81px;text-align:right"><span style="letter-spacing:-0.12px">-70,59</span></div>
<div class="c" style="left:959px;top:645.1px;width:82px;text-align:right"><span style="letter-spacing:0.02px">-14,11</span></div>
<div class="c" style="left:1045px;top:645.1px;width:81px;text-align:right"><span style="letter-spacing:-0.11px">-84,7</span></div>
<div class="cb" style="left:1346px;top:648px"></div>
<div class="c" style="left:1377.2px;top:645.2px;width:119.8px"><span style="letter-spacing:-0.24px">Распечатан</span></div>
<div class="c" style="left:1501.2px;top:645.2px;width:119.8px"><span style="letter-spacing:0.02px">Принят</span> <span style="letter-spacing:0.60px">к</span> <span style="letter-spacing:0.05px">загрузке</span></div>
<div class="cbc" style="left:297px;top:670px"><svg width="13" height="13" viewBox="0 0 13 13" style="left:0;top:0"><path d="M2.7 6.9 L5.3 9.5 L10 3.3" fill="none" stroke="#fff" stroke-width="1.9" stroke-linecap="butt" stroke-linejoin="miter"/></svg></div>
<div class="c" style="left:328.2px;top:667.2px;width:64.8px"><span style="letter-spacing:-0.21px">00032</span></div>
<div class="c" style="left:397.2px;top:667.2px;width:21.8px"><span style="letter-spacing:-0.66px">УУ</span></div>
<div class="c" style="left:423.2px;top:667.2px;width:46.8px"><span style="letter-spacing:-0.34px">13.03.24</span></div>
<div class="c" style="left:474.2px;top:667.2px;width:30.8px"><span style="letter-spacing:-0.13px">11:03</span></div>
<div class="c" style="left:509.2px;top:667.2px;width:46.8px"><span style="letter-spacing:-0.34px">13.03.24</span></div>
<div class="c" style="left:560.2px;top:667.2px;width:158.8px"><span style="letter-spacing:-0.11px">ЛюксСофтТрейд2</span></div>
<div class="c" style="left:720px;top:667.1px;width:65px;text-align:right"><span style="letter-spacing:-0.21px">1</span></div>
<div class="c" style="left:874px;top:667.1px;width:81px;text-align:right"><span style="letter-spacing:-0.12px">-10,25</span></div>
<div class="c" style="left:959px;top:667.1px;width:82px;text-align:right"><span style="letter-spacing:-0.11px">-2,05</span></div>
<div class="c" style="left:1045px;top:667.1px;width:81px;text-align:right"><span style="letter-spacing:-0.11px">-12,3</span></div>
<div class="cb" style="left:1346px;top:670px"></div>
<div class="c" style="left:1377.2px;top:667.2px;width:119.8px"><span style="letter-spacing:-0.27px">Не</span> <span style="letter-spacing:-0.11px">распечатан</span></div>
<div class="c" style="left:1501.2px;top:667.2px;width:119.8px"><span style="letter-spacing:-0.27px">Не</span> <span style="letter-spacing:0.06px">загружен</span></div>
<div class="cbc" style="left:297px;top:692px"><svg width="13" height="13" viewBox="0 0 13 13" style="left:0;top:0"><path d="M2.7 6.9 L5.3 9.5 L10 3.3" fill="none" stroke="#fff" stroke-width="1.9" stroke-linecap="butt" stroke-linejoin="miter"/></svg></div>
<div class="c" style="left:328.2px;top:689.2px;width:64.8px"><span style="letter-spacing:-0.21px">00436</span></div>
<div class="c" style="left:397.2px;top:689.2px;width:21.8px"><span style="letter-spacing:-0.20px">ПО</span></div>
<div class="c" style="left:423.2px;top:689.2px;width:46.8px"><span style="letter-spacing:-0.34px">13.03.24</span></div>
<div class="c" style="left:474.2px;top:689.2px;width:30.8px"><span style="letter-spacing:-0.13px">17:11</span></div>
<div class="c" style="left:509.2px;top:689.2px;width:46.8px"><span style="letter-spacing:-0.34px">13.03.24</span></div>
<div class="c" style="left:560.2px;top:689.2px;width:158.8px"><span style="letter-spacing:-0.11px">ЛюксСофтТрейд2</span></div>
<div class="c" style="left:720px;top:689.1px;width:65px;text-align:right"><span style="letter-spacing:-0.21px">1</span></div>
<div class="c" style="left:874px;top:689.1px;width:81px;text-align:right"><span style="letter-spacing:-0.29px">574,18</span></div>
<div class="c" style="left:959px;top:689.1px;width:82px;text-align:right"><span style="letter-spacing:-0.14px">114,83</span></div>
<div class="c" style="left:1045px;top:689.1px;width:81px;text-align:right"><span style="letter-spacing:-0.29px">689,01</span></div>
<div class="cb" style="left:1346px;top:692px"></div>
<div class="c" style="left:1377.2px;top:689.2px;width:119.8px"><span style="letter-spacing:-0.24px">Распечатан</span></div>
<div class="c" style="left:1501.2px;top:689.2px;width:119.8px"><span style="letter-spacing:-0.27px">Не</span> <span style="letter-spacing:0.06px">загружен</span></div>
<div class="c" style="left:1625.2px;top:689.2px;width:235.8px"><span style="letter-spacing:-0.25px">ТО2302171</span></div>
<div class="cbc" style="left:297px;top:714px"><svg width="13" height="13" viewBox="0 0 13 13" style="left:0;top:0"><path d="M2.7 6.9 L5.3 9.5 L10 3.3" fill="none" stroke="#fff" stroke-width="1.9" stroke-linecap="butt" stroke-linejoin="miter"/></svg></div>
<div class="c" style="left:328.2px;top:711.2px;width:64.8px"><span style="letter-spacing:-0.21px">00034</span></div>
<div class="c" style="left:397.2px;top:711.2px;width:21.8px"><span style="letter-spacing:-0.66px">УУ</span></div>
<div class="c" style="left:423.2px;top:711.2px;width:46.8px"><span style="letter-spacing:-0.34px">13.03.24</span></div>
<div class="c" style="left:474.2px;top:711.2px;width:30.8px"><span style="letter-spacing:-0.13px">11:15</span></div>
<div class="c" style="left:509.2px;top:711.2px;width:46.8px"><span style="letter-spacing:-0.34px">13.03.24</span></div>
<div class="c" style="left:560.2px;top:711.2px;width:158.8px"><span style="letter-spacing:-0.11px">ЛюксСофтТрейд2</span></div>
<div class="c" style="left:720px;top:711.1px;width:65px;text-align:right"><span style="letter-spacing:-0.21px">1</span></div>
<div class="c" style="left:789px;top:711.1px;width:81px;text-align:right"><span style="letter-spacing:-0.11px">-0,14</span></div>
<div class="c" style="left:874px;top:711.1px;width:81px;text-align:right"><span style="letter-spacing:-0.11px">-1,66</span></div>
<div class="c" style="left:959px;top:711.1px;width:82px;text-align:right"><span style="letter-spacing:-0.11px">-0,18</span></div>
<div class="c" style="left:1045px;top:711.1px;width:81px;text-align:right"><span style="letter-spacing:-0.11px">-1,98</span></div>
<div class="cb" style="left:1346px;top:714px"></div>
<div class="c" style="left:1377.2px;top:711.2px;width:119.8px"><span style="letter-spacing:-0.27px">Не</span> <span style="letter-spacing:-0.11px">распечатан</span></div>
<div class="c" style="left:1501.2px;top:711.2px;width:119.8px"><span style="letter-spacing:-0.27px">Не</span> <span style="letter-spacing:0.06px">загружен</span></div>
<div class="cbc" style="left:297px;top:736px"><svg width="13" height="13" viewBox="0 0 13 13" style="left:0;top:0"><path d="M2.7 6.9 L5.3 9.5 L10 3.3" fill="none" stroke="#fff" stroke-width="1.9" stroke-linecap="butt" stroke-linejoin="miter"/></svg></div>
<div class="c" style="left:328.2px;top:733.2px;width:64.8px"><span style="letter-spacing:-0.21px">00035</span></div>
<div class="c" style="left:397.2px;top:733.2px;width:21.8px"><span style="letter-spacing:-0.66px">УУ</span></div>
<div class="c" style="left:423.2px;top:733.2px;width:46.8px"><span style="letter-spacing:-0.34px">13.03.24</span></div>
<div class="c" style="left:474.2px;top:733.2px;width:30.8px"><span style="letter-spacing:-0.31px">17:18</span></div>
<div class="c" style="left:509.2px;top:733.2px;width:46.8px"><span style="letter-spacing:-0.34px">13.03.24</span></div>
<div class="c" style="left:560.2px;top:733.2px;width:158.8px"><span style="letter-spacing:-0.11px">ЛюксСофтТрейд2</span></div>
<div class="c" style="left:720px;top:733.1px;width:65px;text-align:right"><span style="letter-spacing:-0.21px">1</span></div>
<div class="c" style="left:789px;top:733.1px;width:81px;text-align:right"><span style="letter-spacing:-0.11px">-2,73</span></div>
<div class="c" style="left:874px;top:733.1px;width:81px;text-align:right"><span style="letter-spacing:-0.11px">-0,52</span></div>
<div class="c" style="left:959px;top:733.1px;width:82px;text-align:right"><span style="letter-spacing:-0.11px">-0,65</span></div>
<div class="c" style="left:1045px;top:733.1px;width:81px;text-align:right"><span style="letter-spacing:-0.08px">-3,9</span></div>
<div class="cb" style="left:1346px;top:736px"></div>
<div class="c" style="left:1377.2px;top:733.2px;width:119.8px"><span style="letter-spacing:-0.27px">Не</span> <span style="letter-spacing:-0.11px">распечатан</span></div>
<div class="c" style="left:1501.2px;top:733.2px;width:119.8px"><span style="letter-spacing:-0.27px">Не</span> <span style="letter-spacing:0.06px">загружен</span></div>
<div class="cbc" style="left:297px;top:758px"><svg width="13" height="13" viewBox="0 0 13 13" style="left:0;top:0"><path d="M2.7 6.9 L5.3 9.5 L10 3.3" fill="none" stroke="#fff" stroke-width="1.9" stroke-linecap="butt" stroke-linejoin="miter"/></svg></div>
<div class="c" style="left:328.2px;top:755.2px;width:64.8px"><span style="letter-spacing:-0.21px">00038</span></div>
<div class="c" style="left:397.2px;top:755.2px;width:21.8px"><span style="letter-spacing:-0.66px">УУ</span></div>
<div class="c" style="left:423.2px;top:755.2px;width:46.8px"><span style="letter-spacing:-0.34px">13.03.24</span></div>
<div class="c" style="left:474.2px;top:755.2px;width:30.8px"><span style="letter-spacing:-0.31px">20:18</span></div>
<div class="c" style="left:509.2px;top:755.2px;width:46.8px"><span style="letter-spacing:-0.34px">13.03.24</span></div>
<div class="c" style="left:560.2px;top:755.2px;width:158.8px"><span style="letter-spacing:-0.11px">ЛюксСофтТрейд2</span></div>
<div class="c" style="left:720px;top:755.1px;width:65px;text-align:right"><span style="letter-spacing:-0.21px">1</span></div>
<div class="c" style="left:874px;top:755.1px;width:81px;text-align:right"><span style="letter-spacing:-0.11px">-0,41</span></div>
<div class="c" style="left:959px;top:755.1px;width:82px;text-align:right"><span style="letter-spacing:-0.11px">-0,09</span></div>
<div class="c" style="left:1045px;top:755.1px;width:81px;text-align:right"><span style="letter-spacing:-0.08px">-0,5</span></div>
<div class="cb" style="left:1346px;top:758px"></div>
<div class="c" style="left:1377.2px;top:755.2px;width:119.8px"><span style="letter-spacing:-0.24px">Распечатан</span></div>
<div class="c" style="left:1501.2px;top:755.2px;width:119.8px"><span style="letter-spacing:-0.27px">Не</span> <span style="letter-spacing:0.06px">загружен</span></div>
<div class="cbc" style="left:297px;top:780px"><svg width="13" height="13" viewBox="0 0 13 13" style="left:0;top:0"><path d="M2.7 6.9 L5.3 9.5 L10 3.3" fill="none" stroke="#fff" stroke-width="1.9" stroke-linecap="butt" stroke-linejoin="miter"/></svg></div>
<div class="c" style="left:328.2px;top:777.2px;width:64.8px"><span style="letter-spacing:-0.21px">00041</span></div>
<div class="c" style="left:397.2px;top:777.2px;width:21.8px"><span style="letter-spacing:-0.66px">УУ</span></div>
<div class="c" style="left:423.2px;top:777.2px;width:46.8px"><span style="letter-spacing:-0.34px">13.03.24</span></div>
<div class="c" style="left:474.2px;top:777.2px;width:30.8px"><span style="letter-spacing:-0.31px">17:02</span></div>
<div class="c" style="left:509.2px;top:777.2px;width:46.8px"><span style="letter-spacing:-0.34px">13.03.24</span></div>
<div class="c" style="left:560.2px;top:777.2px;width:158.8px"><span style="letter-spacing:0.09px">Магазин</span> <span style="letter-spacing:-0.21px">12</span></div>
<div class="c" style="left:720px;top:777.1px;width:65px;text-align:right"><span style="letter-spacing:-0.21px">1</span></div>
<div class="c" style="left:789px;top:777.1px;width:81px;text-align:right"><span style="letter-spacing:-0.31px">77,09</span></div>
<div class="c" style="left:959px;top:777.1px;width:82px;text-align:right"><span style="letter-spacing:-0.31px">15,42</span></div>
<div class="c" style="left:1045px;top:777.1px;width:81px;text-align:right"><span style="letter-spacing:-0.31px">92,51</span></div>
<div class="cb" style="left:1346px;top:780px"></div>
<div class="c" style="left:1377.2px;top:777.2px;width:119.8px"><span style="letter-spacing:-0.27px">Не</span> <span style="letter-spacing:-0.11px">распечатан</span></div>
<div class="c" style="left:1501.2px;top:777.2px;width:119.8px"><span style="letter-spacing:-0.27px">Не</span> <span style="letter-spacing:0.06px">загружен</span></div>
<div class="cbc" style="left:297px;top:802px"><svg width="13" height="13" viewBox="0 0 13 13" style="left:0;top:0"><path d="M2.7 6.9 L5.3 9.5 L10 3.3" fill="none" stroke="#fff" stroke-width="1.9" stroke-linecap="butt" stroke-linejoin="miter"/></svg></div>
<div class="c" style="left:328.2px;top:799.2px;width:64.8px"><span style="letter-spacing:-0.21px">00042</span></div>
<div class="c" style="left:397.2px;top:799.2px;width:21.8px"><span style="letter-spacing:-0.66px">УУ</span></div>
<div class="c" style="left:423.2px;top:799.2px;width:46.8px"><span style="letter-spacing:-0.34px">13.03.24</span></div>
<div class="c" style="left:474.2px;top:799.2px;width:30.8px"><span style="letter-spacing:-0.31px">17:06</span></div>
<div class="c" style="left:509.2px;top:799.2px;width:46.8px"><span style="letter-spacing:-0.34px">13.03.24</span></div>
<div class="c" style="left:560.2px;top:799.2px;width:158.8px"><span style="letter-spacing:0.09px">Магазин</span> <span style="letter-spacing:-0.21px">12</span></div>
<div class="c" style="left:720px;top:799.1px;width:65px;text-align:right"><span style="letter-spacing:-0.21px">1</span></div>
<div class="c" style="left:874px;top:799.1px;width:81px;text-align:right"><span style="letter-spacing:-0.34px">6,67</span></div>
<div class="c" style="left:959px;top:799.1px;width:82px;text-align:right"><span style="letter-spacing:-0.12px">-16,67</span></div>
<div class="c" style="left:1045px;top:799.1px;width:81px;text-align:right"><span style="letter-spacing:0.13px">-10</span></div>
<div class="cb" style="left:1346px;top:802px"></div>
<div class="c" style="left:1377.2px;top:799.2px;width:119.8px"><span style="letter-spacing:-0.27px">Не</span> <span style="letter-spacing:-0.11px">распечатан</span></div>
<div class="c" style="left:1501.2px;top:799.2px;width:119.8px"><span style="letter-spacing:-0.27px">Не</span> <span style="letter-spacing:0.06px">загружен</span></div>
<div class="cbc" style="left:297px;top:824px"><svg width="13" height="13" viewBox="0 0 13 13" style="left:0;top:0"><path d="M2.7 6.9 L5.3 9.5 L10 3.3" fill="none" stroke="#fff" stroke-width="1.9" stroke-linecap="butt" stroke-linejoin="miter"/></svg></div>
<div class="c" style="left:328.2px;top:821.2px;width:64.8px"><span style="letter-spacing:-0.21px">00044</span></div>
<div class="c" style="left:397.2px;top:821.2px;width:21.8px"><span style="letter-spacing:-0.66px">УУ</span></div>
<div class="c" style="left:423.2px;top:821.2px;width:46.8px"><span style="letter-spacing:-0.34px">13.03.24</span></div>
<div class="c" style="left:474.2px;top:821.2px;width:30.8px"><span style="letter-spacing:-0.31px">16:46</span></div>
<div class="c" style="left:509.2px;top:821.2px;width:46.8px"><span style="letter-spacing:-0.34px">13.03.24</span></div>
<div class="c" style="left:560.2px;top:821.2px;width:158.8px"><span style="letter-spacing:0.09px">Магазин</span> <span style="letter-spacing:-0.21px">12</span></div>
<div class="c" style="left:720px;top:821.1px;width:65px;text-align:right"><span style="letter-spacing:-0.21px">1</span></div>
<div class="c" style="left:789px;top:821.1px;width:81px;text-align:right"><span style="letter-spacing:-0.31px">35,43</span></div>
<div class="c" style="left:959px;top:821.1px;width:82px;text-align:right"><span style="letter-spacing:-0.34px">7,08</span></div>
<div class="c" style="left:1045px;top:821.1px;width:81px;text-align:right"><span style="letter-spacing:-0.31px">42,51</span></div>
<div class="cb" style="left:1346px;top:824px"></div>
<div class="c" style="left:1377.2px;top:821.2px;width:119.8px"><span style="letter-spacing:-0.27px">Не</span> <span style="letter-spacing:-0.11px">распечатан</span></div>
<div class="c" style="left:1501.2px;top:821.2px;width:119.8px"><span style="letter-spacing:-0.27px">Не</span> <span style="letter-spacing:0.06px">загружен</span></div>
<div class="a" style="left:281px;top:873px;width:28px;height:22px;background:#d7e5ea;border-radius:4px"></div>
<svg width="16" height="16" viewBox="0 0 16 16" style="left:286.5px;top:876px"><circle cx="2.5" cy="3.3" r="1.5" fill="none" stroke="#4fb0ea" stroke-width="1.2" stroke-linecap="round" stroke-linejoin="round"/><circle cx="2.5" cy="8.2" r="1.5" fill="none" stroke="#4fb0ea" stroke-width="1.2" stroke-linecap="round" stroke-linejoin="round"/><circle cx="2.5" cy="13.1" r="1.5" fill="none" stroke="#4fb0ea" stroke-width="1.2" stroke-linecap="round" stroke-linejoin="round"/><path d="M7.2 3.5 H15.8 M7.2 8.5 H15.8 M7.2 13.5 H15.8" fill="none" stroke="#2e2e2e" stroke-width="1.2" stroke-linecap="round" stroke-linejoin="round"/></svg>
<svg width="16" height="16" viewBox="0 0 16 16" style="left:315px;top:876px"><path d="M5.6 1 V15 M10.6 1 V15 M1 5.6 H15 M1 10.6 H15" fill="none" stroke="#4fb0ea" stroke-width="1.2" stroke-linecap="round" stroke-linejoin="round"/><rect x="0.65" y="0.65" width="14.7" height="14.7" rx="0.8" fill="none" stroke="#2e2e2e" stroke-width="1.2" stroke-linecap="round" stroke-linejoin="round"/></svg>
<svg width="16" height="16" viewBox="0 0 16 16" style="left:343px;top:876px"><rect x="0.65" y="2.65" width="14.7" height="12.7" rx="1.8" fill="none" stroke="#2e2e2e" stroke-width="1.2" stroke-linecap="round" stroke-linejoin="round"/><path d="M0.7 5.5 H15.3 M4.5 0.7 V2.6 M11.5 0.7 V2.6" fill="none" stroke="#2e2e2e" stroke-width="1.2" stroke-linecap="round" stroke-linejoin="round"/><path d="M3.6 10.5 H12.4 M5.5 7.8 V13.2 M10.5 7.8 V13.2" fill="none" stroke="#4fb0ea" stroke-width="1.2" stroke-linecap="round" stroke-linejoin="round"/></svg>
<svg width="16" height="16" viewBox="0 0 16 16" style="left:375.5px;top:876px"><path d="M0.6 2.5 H14.8" fill="none" stroke="#2e2e2e" stroke-width="1.2" stroke-linecap="round" stroke-linejoin="round"/><path d="M2.6 6.5 H12.8" fill="none" stroke="#4fb0ea" stroke-width="1.2" stroke-linecap="round" stroke-linejoin="round"/><path d="M4.3 10.5 H10.6" fill="none" stroke="#2e2e2e" stroke-width="1.2" stroke-linecap="round" stroke-linejoin="round"/><path d="M6.4 14.5 H8.8" fill="none" stroke="#4fb0ea" stroke-width="1.2" stroke-linecap="round" stroke-linejoin="round"/></svg>
<svg width="16" height="16" viewBox="0 0 16 16" style="left:407px;top:876px"><path d="M15.27 10.21 L14.70 11.58 L12.33 11.55 L11.55 12.33 L11.58 14.70 L10.21 15.27 L8.55 13.57 L7.45 13.57 L5.79 15.27 L4.42 14.70 L4.45 12.33 L3.67 11.55 L1.30 11.58 L0.73 10.21 L2.43 8.55 L2.43 7.45 L0.73 5.79 L1.30 4.42 L3.67 4.45 L4.45 3.67 L4.42 1.30 L5.79 0.73 L7.45 2.43 L8.55 2.43 L10.21 0.73 L11.58 1.30 L11.55 3.67 L12.33 4.45 L14.70 4.42 L15.27 5.79 L13.57 7.45 L13.57 8.55 Z" fill="none" stroke="#2e2e2e" stroke-width="1.2" stroke-linecap="round" stroke-linejoin="round"/><circle cx="8" cy="8" r="2.3" fill="none" stroke="#4fb0ea" stroke-width="1.2" stroke-linecap="round" stroke-linejoin="round"/></svg>
<svg width="16" height="16" viewBox="0 0 16 16" style="left:439.5px;top:876px"><path d="M1 1.2 V3.6 M0.6 6.8 Q1.6 6.2 1.8 7.2 L0.6 9 H2 M0.6 12.2 H1.8 L1 13.2 Q2 13.6 1.6 14.6 L0.6 14.8" fill="none" stroke="#4fb0ea" stroke-width="0.9" stroke-linecap="round"/><path d="M6 2.5 H15 M6 8.5 H15 M6 14.5 H15" fill="none" stroke="#2e2e2e" stroke-width="1.2" stroke-linecap="round" stroke-linejoin="round"/></svg>
<svg width="16" height="16" viewBox="0 0 16 16" style="left:467px;top:876px"><path d="M0.7 1.5 H15.3 M0.7 5.5 H15.3 M0.7 9.5 H6.6 M0.7 13.5 H6.6" fill="none" stroke="#2e2e2e" stroke-width="1.2" stroke-linecap="round" stroke-linejoin="round"/><path d="M9.2 11.5 H15.8 M12.5 8.2 V14.8" fill="none" stroke="#4fb0ea" stroke-width="1.2" stroke-linecap="round" stroke-linejoin="round"/></svg>
<svg width="16" height="16" viewBox="0 0 16 16" style="left:499px;top:876px"><path d="M8.5 3.6 H0.8 V15.2 H12.4 V8" fill="none" stroke="#2e2e2e" stroke-width="1.2" stroke-linecap="round" stroke-linejoin="round"/><path d="M6.6 9.4 L15 1 M10 0.8 H15.2 V6" fill="none" stroke="#4fb0ea" stroke-width="1.2" stroke-linecap="round" stroke-linejoin="round"/></svg>
<svg width="16" height="16" viewBox="0 0 16 16" style="left:531px;top:876px"><path d="M4.5 3.4 H0.8 V12.6 H2 M2 3.4 H10.6 M8 0.7 L10.8 3.4 L8 6.2" fill="none" stroke="#2e2e2e" stroke-width="1.2" stroke-linecap="round" stroke-linejoin="round"/><path d="M15.4 4.6 V12.6 H6.2 M9 9.8 L6 12.6 L9 15.4" fill="none" stroke="#4fb0ea" stroke-width="1.2" stroke-linecap="round" stroke-linejoin="round"/></svg>
<div class="cbc" style="left:522px;top:901px"><svg width="13" height="13" viewBox="0 0 13 13" style="left:0;top:0"><path d="M2.7 6.9 L5.3 9.5 L10 3.3" fill="none" stroke="#fff" stroke-width="1.9" stroke-linecap="butt" stroke-linejoin="miter"/></svg></div>
<div class="t" style="left:537px;top:901.8px;"><span style="letter-spacing:0.07px">Переоценки</span> <span style="letter-spacing:-0.18px">на</span> <span style="letter-spacing:0.03px">текущую</span> <span style="letter-spacing:-0.26px">дату</span> <span style="letter-spacing:-0.61px">(F6)</span></div>
<div class="btn" style="left:729px;top:897px;width:145px;height:22px"></div>
<div class="t" style="left:742px;top:900.5px;"><span style="letter-spacing:-0.24px">Распечатать</span> <span style="letter-spacing:0.16px">ценники</span></div>
<div class="btn" style="left:878px;top:897px;width:156px;height:22px"></div>
<div class="t" style="left:893px;top:900.5px;"><span style="letter-spacing:-0.11px">Перепечатать</span> <span style="letter-spacing:0.16px">ценники</span></div>
<div class="btn" style="left:1041px;top:897px;width:173px;height:22px"></div>
<div class="t" style="left:1053px;top:900.5px;"><span style="letter-spacing:-0.10px">Загрузить</span> <span style="letter-spacing:-0.01px">в</span> <span style="letter-spacing:0.11px">оборудование</span></div>
<div class="btn" style="left:1219px;top:897px;width:141px;height:22px"></div>
<div class="t" style="left:1256px;top:900.5px;"><span style="letter-spacing:-0.01px">Акт</span> <span style="letter-spacing:0.11px">переоценки</span></div>
<svg width="15" height="14" viewBox="0 0 15 14" style="left:1234.5px;top:902px"><path d="M3.2 4 V0.7 H11.8 V4" fill="none" stroke="#4fb0ea" stroke-width="1.1" stroke-linejoin="round"/><path d="M3.2 10.4 H0.7 V4.2 H14.3 V10.4 H11.8" fill="none" stroke="#2e2e2e" stroke-width="1.2" stroke-linejoin="round"/><rect x="3.4" y="7.6" width="8.2" height="5.6" fill="none" stroke="#2e2e2e" stroke-width="1.2" stroke-linejoin="round"/></svg>
<div class="btn" style="left:1364px;top:897px;width:161px;height:22px"></div>
<div class="t" style="left:1401px;top:900.5px;"><span style="letter-spacing:-0.01px">Акт</span> <span style="letter-spacing:0.11px">переоценки</span> <span style="letter-spacing:-0.38px">(xls)</span></div>
<svg width="15" height="14" viewBox="0 0 15 14" style="left:1379.5px;top:902px"><path d="M3.2 4 V0.7 H11.8 V4" fill="none" stroke="#4fb0ea" stroke-width="1.1" stroke-linejoin="round"/><path d="M3.2 10.4 H0.7 V4.2 H14.3 V10.4 H11.8" fill="none" stroke="#2e2e2e" stroke-width="1.2" stroke-linejoin="round"/><rect x="3.4" y="7.6" width="8.2" height="5.6" fill="none" stroke="#2e2e2e" stroke-width="1.2" stroke-linejoin="round"/></svg>
<div class="btn" style="left:1532px;top:897px;width:101px;height:22px"></div>
<div class="t" style="left:1565.5px;top:900.5px;"><span style="letter-spacing:-0.03px">Добавить</span></div>
<svg width="12" height="12" viewBox="0 0 12 12" style="left:1547px;top:903px"><path d="M6 0.8 V11.2 M0.8 6 H11.2" stroke="#2e2e2e" stroke-width="1.1" fill="none"/></svg>
<div class="btn" style="left:1637px;top:897px;width:129px;height:22px"></div>
<div class="t" style="left:1670.5px;top:900.5px;"><span style="letter-spacing:-0.07px">Редактировать</span></div>
<svg width="13" height="13" viewBox="0 0 13 13" style="left:1652.5px;top:902px"><path d="M8.8 0.8 L11.4 3.4 L4.4 10.2 L1.2 11 L2 7.8 Z" fill="none" stroke="#2e2e2e" stroke-width="1" stroke-linejoin="round"/><path d="M0.6 12.4 H11.6" stroke="#4fb0ea" stroke-width="1"/></svg>
<div class="btn" style="left:1770px;top:897px;width:92px;height:22px"></div>
<div class="t" style="left:1803px;top:900.5px;"><span style="letter-spacing:-0.14px">Удалить</span></div>
<svg width="12" height="12" viewBox="0 0 12 12" style="left:1785px;top:903px"><path d="M0.8 6 H11.2" stroke="#2e2e2e" stroke-width="1.1" fill="none"/></svg>
<div class="a" style="left:279px;top:923px;width:1585px;height:1px;background:#d4d4d4"></div>
<div class="btn" style="left:1439px;top:928px;width:42px;height:22px"></div>
<svg width="14" height="14" viewBox="0 0 14 14" style="left:1453px;top:933px"><path d="M1.2 6 Q2 1.4 7 1.2 Q10 1.2 11.8 3.6 M12.2 0.8 V4 H9" fill="none" stroke="#2e2e2e" stroke-width="1.2" stroke-linecap="round" stroke-linejoin="round"/><path d="M12.8 8 Q12 12.6 7 12.8 Q4 12.8 2.2 10.4 M1.8 13.2 V10 H5" fill="none" stroke="#4fb0ea" stroke-width="1.2" stroke-linecap="round" stroke-linejoin="round"/></svg>
<div class="btn" style="left:1485px;top:928px;width:106px;height:22px"></div>
<div class="t" style="left:1518px;top:931.5px;color:#8a8a8a;"><span style="letter-spacing:-0.16px">Сохранить</span></div>
<svg width="13" height="13" viewBox="0 0 13 13" style="left:1499.5px;top:933px"><path d="M2.8 0.7 H9 L12.3 4 V10.2 Q12.3 12.3 10.2 12.3 H2.8 Q0.7 12.3 0.7 10.2 V2.8 Q0.7 0.7 2.8 0.7 Z" fill="none" stroke="#2e2e2e" stroke-width="1.2" stroke-linejoin="round"/><path d="M2.4 11 V7.2 H10.6 V11" fill="none" stroke="#4fb0ea" stroke-width="1.2"/></svg>
<div class="btn" style="left:1595px;top:928px;width:102px;height:22px"></div>
<div class="t" style="left:1628.5px;top:931.5px;color:#8a8a8a;"><span style="letter-spacing:-0.12px">Отменить</span></div>
<svg width="12" height="14" viewBox="0 0 12 14" style="left:1610px;top:932.5px"><path d="M2.6 4 V10 Q2.6 11.6 4.2 11.6 H8 Q9.6 11.6 9.6 10 V4" fill="none" stroke="#2e2e2e" stroke-width="1.2"/><path d="M0.3 2.5 H11.8 M4.4 2.4 V0.8 H7.8 V2.4" fill="none" stroke="#4fb0ea" stroke-width="1.1"/></svg>
<div class="btn" style="left:1701px;top:928px;width:64px;height:22px"></div>
<div class="t" style="left:1734px;top:931.5px;"><span style="letter-spacing:-0.66px">OK</span></div>
<svg width="14" height="12" viewBox="0 0 14 12" style="left:1715px;top:934px"><path d="M0.8 6.4 L4.8 10.4 L13.2 1.2" fill="none" stroke="#2e2e2e" stroke-width="1.2"/></svg>
<div class="btn" style="left:1769px;top:928px;width:93px;height:22px"></div>
<div class="t" style="left:1802px;top:931.5px;"><span style="letter-spacing:-0.05px">Закрыть</span></div>
<svg width="10" height="10" viewBox="0 0 10 10" style="left:1784.5px;top:934.5px"><path d="M0.5 0.5 L9.3 9.3 M9.3 0.5 L0.5 9.3" fill="none" stroke="#2e2e2e" stroke-width="1.25"/></svg>
<div class="red" style="left:255px;top:1px;width:95px;height:56px"></div>
<div class="red" style="left:6px;top:294px;width:207px;height:31px"></div>
<div class="red" style="left:281px;top:378px;width:1572px;height:24px"></div>
<div class="red" style="left:1310px;top:488.5px;width:423px;height:33.5px"></div>
<div class="red" style="left:280px;top:685px;width:1583px;height:27px"></div>
<div class="red" style="left:727px;top:895px;width:149px;height:25.5px"></div>
<div class="red" style="left:1037px;top:895px;width:491px;height:27px"></div>
<svg width="70" height="250" viewBox="200 50 70 250" style="left:200px;top:50px;z-index:5"><path d="M257 55 L214.4 277" stroke="#fe0000" stroke-width="3.2" fill="none"/><path d="M211.3 290.6 L209.8 274.6 L219 277 Z" fill="#fe0000"/></svg>
</body></html>
